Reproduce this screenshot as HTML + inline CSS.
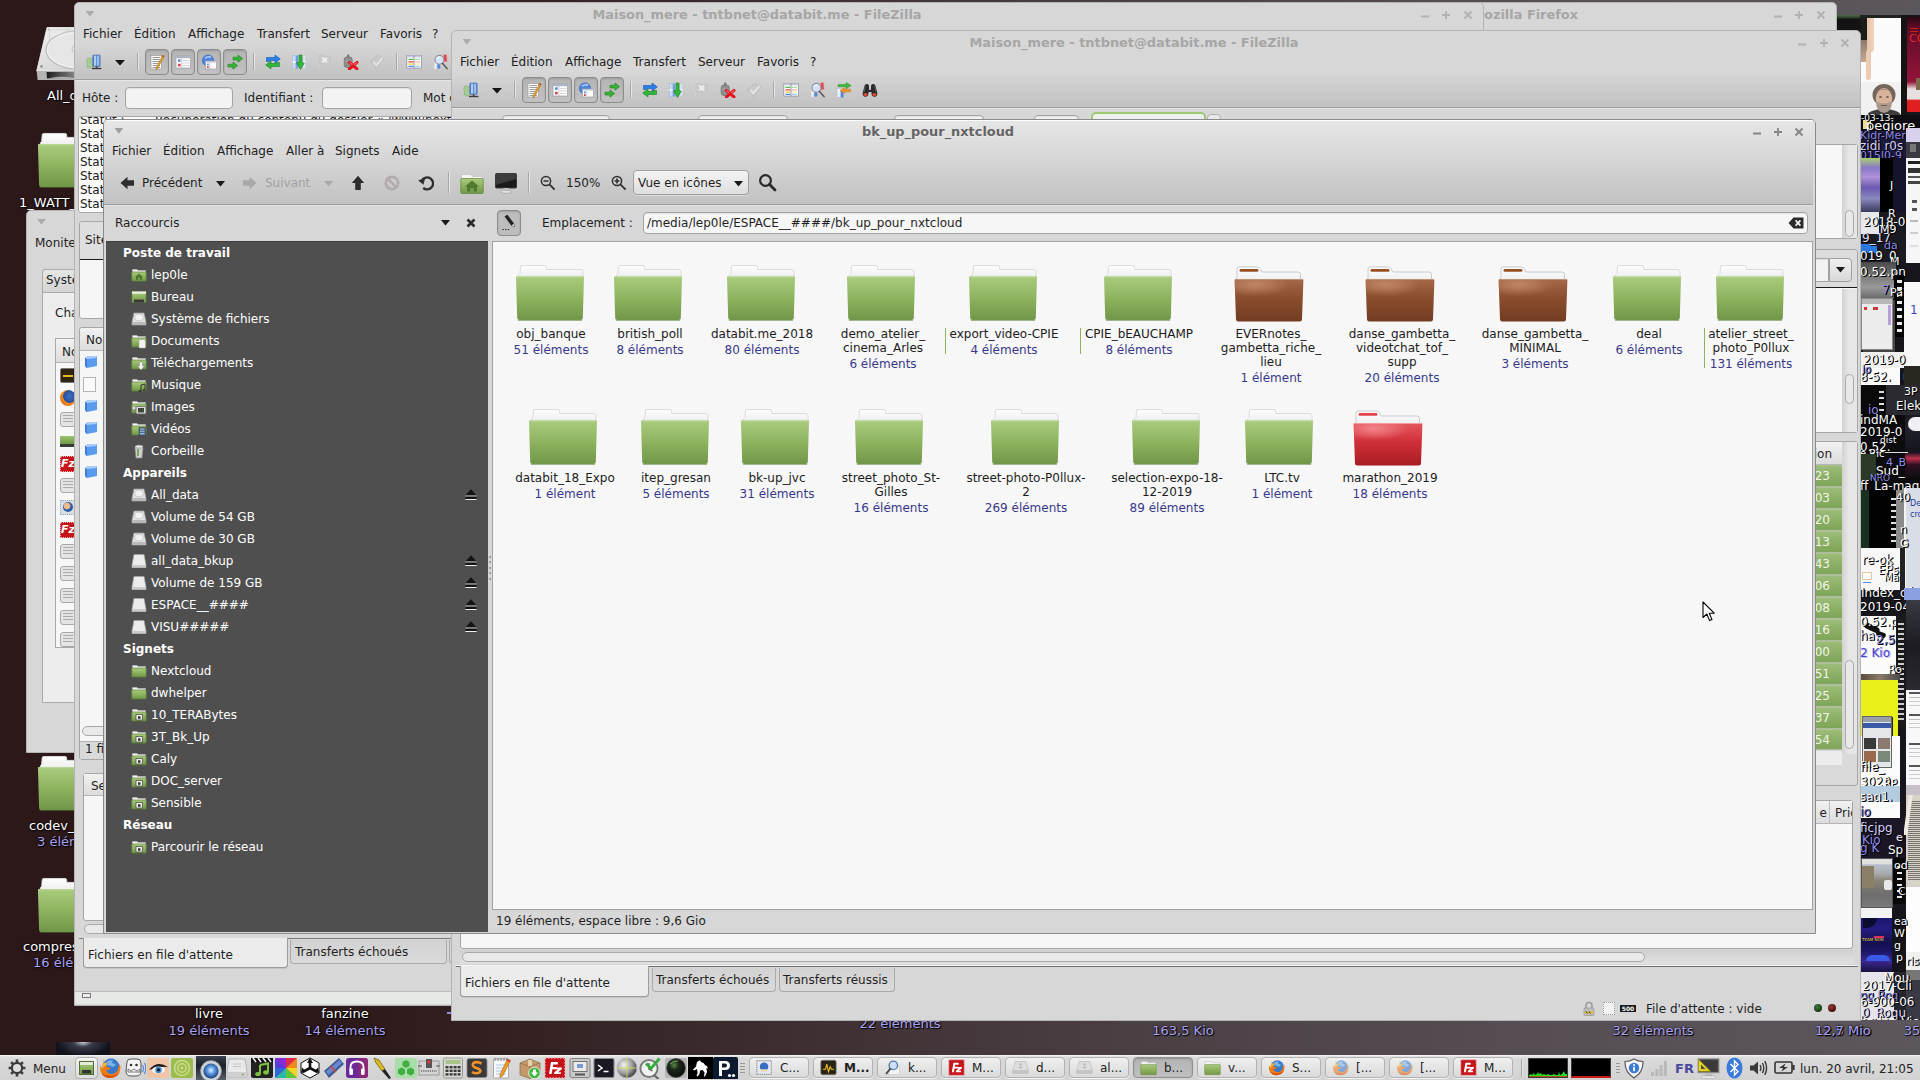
<!DOCTYPE html>
<html lang="fr"><head><meta charset="utf-8"><title>bk_up_pour_nxtcloud</title>
<style>
*{box-sizing:border-box;margin:0;padding:0}
html,body{width:1920px;height:1080px;overflow:hidden}
body{position:relative;background:linear-gradient(90deg,#2c1819 0,#2c1819 16%,#3a292b 36%,#483c40 55%,#554d53 78%,#5c565d 100%);font-family:"DejaVu Sans","Liberation Sans",sans-serif;font-size:12px;color:#1f1f1f;line-height:14px}
.a{position:absolute}
.t{position:absolute;white-space:nowrap;line-height:14px;margin-top:1px}
.win{position:absolute;background:#d7d7d7;border:1px solid #b4b4b4;border-radius:5px 5px 0 0;overflow:hidden}
.tb{position:absolute;left:0;right:0;top:0}
.ttl{position:absolute;margin-top:1px;font-weight:bold;font-size:12.9px;color:#a6a6a6;white-space:nowrap;line-height:16px;transform:translateX(-50%)}
.wb{position:absolute;font-weight:bold;color:#b0b0b0;font-size:13px;line-height:14px}
.menu{position:absolute;white-space:nowrap;line-height:14px;color:#222}
.menu span{position:absolute}
.inp{position:absolute;background:#f3f3f3;border:1px solid #a3a3a3;border-radius:4px;box-shadow:inset 0 1px 1px rgba(0,0,0,.08)}
.pan{position:absolute;background:#f7f7f7;border:1px solid #a6a6a6;border-radius:3px}
.hdr{position:absolute;background:linear-gradient(#f2f2f2,#dcdcdc);border-bottom:1px solid #b5b5b5}
.tgl{position:absolute;width:24px;height:26px;border:1px solid #8c8c8c;border-radius:4px;background:linear-gradient(#b4b4b4,#c2c2c2);box-shadow:inset 0 1px 2px rgba(0,0,0,.15)}
.sep{position:absolute;width:1px;background:#a8a8a8;box-shadow:1px 0 0 #e4e4e4}
.sbt{position:absolute;background:#e9e9e9;border:1px solid #a9a9a9;border-radius:6px}
.dl{position:absolute;white-space:nowrap;color:#fff;text-shadow:1px 1px 1px #000,0 0 2px #000;font-size:13px;line-height:14px}
.dc{position:absolute;white-space:nowrap;color:#a9a3f0;text-shadow:1px 1px 1px #000,0 0 2px #000;font-size:13px;line-height:14px}
.side{position:absolute;left:1px;top:121px;width:382px;height:691px;background:#4f4f4f;color:#fff}
.side .h{position:absolute;left:17px;font-weight:bold;white-space:nowrap;line-height:14px;font-size:12px}
.side .i{position:absolute;left:45px;white-space:nowrap;line-height:14px}
.fi{position:absolute;margin-top:1px;text-align:center;line-height:14px;color:#1c1c1c;transform:translateX(-50%);white-space:nowrap}
.fi i{font-style:normal;color:#37378a;display:block;margin-top:2px}
.tk{position:absolute;top:1057px;width:60px;height:21px;border:1px solid #b2b2b2;border-radius:4px;background:linear-gradient(#efefef,#dadada);box-shadow:0 1px 0 #f3f3f3}
.tk b,.tk span{position:absolute;left:30px;top:3px;font-size:12px;line-height:14px;color:#222;font-weight:normal}
.tk b{font-weight:bold}
</style></head><body>

<svg width="0" height="0" style="position:absolute">
<defs>
<linearGradient id="gG" x1="0" y1="0" x2="0" y2="1"><stop offset="0" stop-color="#a9cb7e"/><stop offset=".5" stop-color="#8db35f"/><stop offset="1" stop-color="#709748"/></linearGradient>
<linearGradient id="gB" x1="0" y1="0" x2="0" y2="1"><stop offset="0" stop-color="#a5694a"/><stop offset=".45" stop-color="#8a4d2e"/><stop offset="1" stop-color="#733c21"/></linearGradient>
<linearGradient id="gR" x1="0" y1="0" x2="0" y2="1"><stop offset="0" stop-color="#e4575e"/><stop offset=".45" stop-color="#d12f38"/><stop offset="1" stop-color="#a81c24"/></linearGradient>
<radialGradient id="gBh" cx=".3" cy=".25" r=".5"><stop offset="0" stop-color="#c48a68" stop-opacity=".9"/><stop offset="1" stop-color="#c48a68" stop-opacity="0"/></radialGradient>
<radialGradient id="gRh" cx=".3" cy=".25" r=".5"><stop offset="0" stop-color="#f58a8f" stop-opacity=".9"/><stop offset="1" stop-color="#f58a8f" stop-opacity="0"/></radialGradient>
<linearGradient id="gP" x1="0" y1="0" x2="0" y2="1"><stop offset="0" stop-color="#ffffff"/><stop offset="1" stop-color="#ececec"/></linearGradient>
<symbol id="fold" viewBox="0 0 70 60">
<path d="M3.5 12 Q3.5 10.5 5 9.5 L5.5 3 Q5.6 1.5 7 1.5 L30 1.5 Q31.3 1.5 31.4 3 L31.6 5.5 L66 5.5 Q68 5.5 68 7.5 L68 14 L3.5 14Z" fill="url(#gP)" stroke="#dcdcdc" stroke-width="1"/>
<path d="M1.5 12.5 L68.5 12.5 Q69 12.5 69 13.2 L67.8 54 Q67.7 56 65.7 56 L4.3 56 Q2.3 56 2.2 54 L1 13.2 Q1 12.5 1.5 12.5Z" fill="url(#gG)"/>
<path d="M1.3 13 L68.7 13" stroke="#b9d693" stroke-width="1" fill="none"/>
<path d="M3 56.5 L67 56.5" stroke="#5b7d38" stroke-width="1" opacity=".55" fill="none"/>
</symbol>
<symbol id="foldB" viewBox="0 0 70 60">
<path d="M3 14 L3 5 Q3 3 5 3 L23 3 Q25 3 26 4.5 L28 8 L64 8 Q66.5 8 66.5 10.5 L66.5 18 L3 18Z" fill="url(#gP)" stroke="#c9c9c9" stroke-width="1"/>
<rect x="5.5" y="5" width="19" height="2.8" rx="1.4" fill="#9a4f22"/>
<path d="M2 15 L68 15 Q69.5 15 69.4 16.5 L68 55.5 Q67.9 57.5 65.9 57.5 L4.1 57.5 Q2.1 57.5 2 55.5 L.6 16.5 Q.5 15 2 15Z" fill="url(#gB)"/>
<path d="M2 15 L68 15 Q69.5 15 69.4 16.5 L68.6 38 L1.4 38 L.6 16.5 Q.5 15 2 15Z" fill="url(#gBh)"/>
<path d="M1.5 15.5 L68.5 15.5" stroke="#c08f74" stroke-width="1" fill="none"/>
</symbol>
<symbol id="foldR" viewBox="0 0 70 60">
<path d="M3 14 L3 5 Q3 3 5 3 L23 3 Q25 3 26 4.5 L28 8 L64 8 Q66.5 8 66.5 10.5 L66.5 18 L3 18Z" fill="url(#gP)" stroke="#c9c9c9" stroke-width="1"/>
<rect x="5.5" y="5" width="19" height="2.8" rx="1.4" fill="#e8434c"/>
<path d="M2 15 L68 15 Q69.5 15 69.4 16.5 L68 55.5 Q67.9 57.5 65.9 57.5 L4.1 57.5 Q2.1 57.5 2 55.5 L.6 16.5 Q.5 15 2 15Z" fill="url(#gR)"/>
<path d="M2 15 L68 15 Q69.5 15 69.4 16.5 L68.6 38 L1.4 38 L.6 16.5 Q.5 15 2 15Z" fill="url(#gRh)"/>
<path d="M1.5 15.5 L68.5 15.5" stroke="#f39da1" stroke-width="1" fill="none"/>
</symbol>
<symbol id="sf" viewBox="0 0 16 16">
<path d="M1.5 4.5 L1.5 2.5 L6 2.5 L7 3.5 L14.5 3.5 L14.5 6 L1.5 6Z" fill="#f4f4f4" stroke="#bdbdbd" stroke-width=".6"/>
<rect x=".8" y="5" width="14.4" height="9" rx=".8" fill="url(#gG)" stroke="#5f843a" stroke-width=".7"/>
</symbol>
<symbol id="hd" viewBox="0 0 16 16">
<path d="M3 2 L13 2 L15 11 L15 14 L1 14 L1 11Z" fill="#e2e2e2" stroke="#9a9a9a" stroke-width=".8"/>
<path d="M1 11 L15 11 L15 14 L1 14Z" fill="#b9b9b9"/>
<ellipse cx="8" cy="6.5" rx="4.3" ry="3.3" fill="#f1f1f1" stroke="#bdbdbd" stroke-width=".7"/>
</symbol>
<symbol id="usb" viewBox="0 0 16 16">
<path d="M3 1.5 L13 1.5 L15 12 L15 14.5 L1 14.5 L1 12Z" fill="#ececec" stroke="#a5a5a5" stroke-width=".8"/>
<path d="M1 12 L15 12 L15 14.5 L1 14.5Z" fill="#c9c9c9"/>
</symbol>
<symbol id="ej" viewBox="0 0 12 12"><path d="M6 .3 L11.6 6.6 L.4 6.6Z" fill="#141414"/><rect x=".4" y="6.6" width="11.2" height="1" fill="#f2f2f2"/><rect x=".4" y="7.6" width="11.2" height="2.4" fill="#141414"/><rect x=".4" y="10" width="11.2" height="1" fill="#f2f2f2"/></symbol>
</defs></svg>

<svg class="a" style="left:36px;top:26px" width="60" height="56" viewBox="0 0 60 56">
<defs><linearGradient id="hdg" x1="0" y1="0" x2="1" y2="1"><stop offset="0" stop-color="#f2f2f2"/><stop offset=".6" stop-color="#d9d9d9"/><stop offset="1" stop-color="#c4c4c4"/></linearGradient>
<linearGradient id="hds" x1="0" y1="0" x2="1" y2="0"><stop offset="0" stop-color="#1c1c1c"/><stop offset=".6" stop-color="#8a8a8a"/><stop offset="1" stop-color="#cfcfcf"/></linearGradient></defs>
<path d="M11 1.5 L60 1.5 L60 45 L.7 45Z" fill="url(#hdg)" stroke="#f4f4f4" stroke-width=".8"/>
<path d="M.7 45 L60 45 L60 54 L1.6 54Z" fill="#b4b4b4"/>
<path d="M10.5 46 L60 46 L60 52.5 L11 52.5Z" fill="url(#hds)"/>
<path d="M11 52.5 Q25 49 40 52.5Z" fill="#e0e0e0" opacity=".7"/>
<path d="M14 4 L34 3.5 Q20 9 13 19Z" fill="#e9e9e9" stroke="#c9c9c9" stroke-width=".6"/>
<ellipse cx="42" cy="24" rx="32" ry="19" fill="#e6e6e6" stroke="#bcbcbc" stroke-width="1.2"/>
<ellipse cx="42" cy="24" rx="30.5" ry="17.6" fill="none" stroke="#f6f6f6" stroke-width=".8"/>
<ellipse cx="48" cy="23" rx="12" ry="6" fill="#ececec" stroke="#c0c0c0" stroke-width="1"/>
<circle cx="12.5" cy="3.5" r="1" fill="#aaa"/><circle cx="5.5" cy="40.5" r="1.3" fill="#8a8a8a"/></svg>
<div class="dl" style="left:47px;top:89px">All_data</div>
<svg class="a" style="left:37px;top:132px" width="66" height="59" viewBox="0 0 70 60" preserveAspectRatio="none"><use href="#fold" width="70" height="60"/></svg>
<div class="dl" style="left:19px;top:196px">1_WATT_pollux</div>
<svg class="a" style="left:37px;top:755px" width="66" height="59" viewBox="0 0 70 60" preserveAspectRatio="none"><use href="#fold" width="70" height="60"/></svg>
<div class="dl" style="left:29px;top:819px">codev_</div>
<div class="dc" style="left:37px;top:835px">3 éléments</div>
<svg class="a" style="left:37px;top:877px" width="66" height="59" viewBox="0 0 70 60" preserveAspectRatio="none"><use href="#fold" width="70" height="60"/></svg>
<div class="dl" style="left:23px;top:940px">compress</div>
<div class="dc" style="left:33px;top:956px">16 éléments</div>
<div class="dl" style="left:209px;top:1007px;transform:translateX(-50%)">livre</div>
<div class="dc" style="left:209px;top:1024px;transform:translateX(-50%)">19 éléments</div>
<div class="dl" style="left:345px;top:1007px;transform:translateX(-50%)">fanzine</div>
<div class="dc" style="left:345px;top:1024px;transform:translateX(-50%)">14 éléments</div>
<div class="dc" style="left:900px;top:1017px;transform:translateX(-50%)">22 éléments</div>
<div class="dc" style="left:1183px;top:1024px;transform:translateX(-50%)">163,5 Kio</div>
<div class="dc" style="left:1653px;top:1024px;transform:translateX(-50%)">32 éléments</div>
<div class="dc" style="left:1843px;top:1024px;transform:translateX(-50%)">12,5 Mio</div>
<div class="dc" style="left:1847px;top:1024px;transform:translateX(-50%)">2,7 Mio</div>
<div class="dc" style="left:1918px;top:1024px;transform:translateX(-50%)">35 é</div>
<div class="a" style="left:56px;top:1042px;width:54px;height:14px;background:radial-gradient(ellipse at 50% 0,#c9cdd6 0,#3a3d48 25%,#10131c 70%)"></div>
<div class="a" style="left:447px;top:1012px;width:4px;height:2px;background:#8f8bd8"></div>
<div class="a" style="left:1837px;top:15px;width:24px;height:20px;background:linear-gradient(#4a6a44 0,#2a3a28 3px,#121212 4px,#161616 100%)"></div>
<div class="a" style="left:1860px;top:15px;width:60px;height:1005px;overflow:hidden;background:#16161c">
<div class="a" style="left:0px;top:0px;width:41px;height:3px;background:#20241e;"></div>
<div class="a" style="left:1px;top:3px;width:40px;height:64px;background:#fbfbfb;"></div>
<div class="a" style="left:1px;top:3px;width:7px;height:22px;background:#1c1c1c;"></div>
<div class="a" style="left:1px;top:25px;width:6px;height:22px;background:linear-gradient(#8a7a70,#c8a890);"></div>
<div class="a" style="left:7px;top:3px;width:7px;height:34px;background:linear-gradient(90deg,#e8c4a8,#f0d4bc);border-radius:0 0 4px 4px"></div>
<div class="a" style="left:6px;top:35px;width:5px;height:30px;background:#ecccb4;border-radius:3px"></div>
<div class="a" style="left:1px;top:67px;width:40px;height:33px;background:#f1f1f1;"></div>
<svg class="a" style="left:1px;top:67px" width="40" height="33" viewBox="0 0 40 33"><ellipse cx="23" cy="34" rx="17" ry="7" fill="#3c3c3c"/><ellipse cx="23" cy="13" rx="11.5" ry="11" fill="#74665c"/><ellipse cx="23" cy="17" rx="8.2" ry="11" fill="#d9b29c"/><path d="M15 19 Q23 24 31 19 Q31 30 23 31 Q15 30 15 19Z" fill="#a8988e"/><path d="M14 12 Q23 2 32 12 Q28 7 23 7.5 Q18 7 14 12Z" fill="#5c5048"/><ellipse cx="19.5" cy="15" rx="1.4" ry=".8" fill="#4a3a34"/><ellipse cx="26.5" cy="15" rx="1.4" ry=".8" fill="#4a3a34"/><path d="M20 23.5h6" stroke="#7a5a50" stroke-width="1"/></svg>
<div class="a" style="left:41px;top:0px;width:6px;height:100px;background:#141414;"></div>
<div class="a" style="left:47px;top:2px;width:13px;height:95px;background:linear-gradient(#2a0810 0,#5a0c24 10%,#7a1030 40%,#94143a 68%,#e8e0e0 76%,#e8e0e0 86%,#e02020 88%,#e02020 100%);"></div>
<div class="t" style="left:49px;top:16px;color:#e8262c;font-size:11px;text-shadow:1px 1px 0 transparent,1px 0 0 transparent">CO</div>
<div class="a" style="left:50px;top:13px;width:8px;height:1px;background:#c02020;"></div>
<div class="a" style="left:50px;top:16px;width:8px;height:1px;background:#c02020;"></div>
<div class="a" style="left:56px;top:63px;width:4px;height:12px;background:#7a6a4a;"></div>
<div class="a" style="left:0px;top:100px;width:60px;height:16px;background:#0e0e12;"></div>
<div class="a" style="left:3px;top:105px;width:8px;height:9px;background:#e8e098;"></div>
<div class="t" style="left:1px;top:95px;color:#fff;font-size:9px;text-shadow:1px 1px 0 #000,1px 0 0 #000">-03-13-</div>
<div class="t" style="left:6px;top:103px;color:#fff;font-size:13px;text-shadow:1px 1px 0 #000,1px 0 0 #000">pegiore</div>
<div class="a" style="left:0px;top:116px;width:46px;height:28px;background:#1c1a3a;"></div>
<div class="t" style="left:0px;top:113px;color:#8f8be6;font-size:11px;text-shadow:1px 1px 0 #000,1px 0 0 #000">Kidr-Mer</div>
<div class="t" style="left:0px;top:123px;color:#d8d4ff;font-size:12px;text-shadow:1px 1px 0 #000,1px 0 0 #000">zidi r0s</div>
<div class="t" style="left:0px;top:133px;color:#8f8be6;font-size:11px;text-shadow:1px 1px 0 #000,1px 0 0 #000">015l0-9</div>
<div class="t" style="left:30px;top:139px;color:#fff;font-size:12px;text-shadow:1px 1px 0 #000,1px 0 0 #000">g.</div>
<div class="a" style="left:46px;top:113px;width:14px;height:14px;background:#d8d0ec;"></div>
<div class="a" style="left:46px;top:127px;width:14px;height:16px;background:#3a3a40;"></div>
<div class="a" style="left:50px;top:129px;width:6px;height:8px;background:#777;"></div>
<div class="a" style="left:1px;top:143px;width:19px;height:54px;background:linear-gradient(#a8d070 0,#8a78c8 18%,#b090d8 35%,#6a5ab0 55%,#8a88c0 75%,#3a3a5a 100%);"></div>
<div class="a" style="left:20px;top:143px;width:13px;height:54px;background:#000;"></div>
<div class="a" style="left:33px;top:143px;width:13px;height:54px;background:#14142c;"></div>
<div class="a" style="left:46px;top:143px;width:14px;height:105px;background:#f6f6f6;"></div>
<div class="a" style="left:48px;top:146px;width:12px;height:3px;background:#222;"></div>
<div class="a" style="left:48px;top:153px;width:12px;height:5px;background:#333;"></div>
<div class="a" style="left:48px;top:161px;width:12px;height:2px;background:#555;"></div>
<div class="a" style="left:48px;top:166px;width:12px;height:3px;background:#444;"></div>
<div class="a" style="left:52px;top:185px;width:5px;height:3px;background:#555;"></div>
<div class="a" style="left:52px;top:193px;width:5px;height:3px;background:#555;"></div>
<div class="a" style="left:50px;top:205px;width:8px;height:2px;background:#bbb;"></div>
<div class="a" style="left:50px;top:217px;width:8px;height:2px;background:#ccc;"></div>
<div class="a" style="left:50px;top:230px;width:8px;height:2px;background:#ddd;"></div>
<div class="t" style="left:30px;top:163px;color:#fff;font-size:11px;text-shadow:1px 1px 0 #000,1px 0 0 #000">J</div>
<div class="a" style="left:0px;top:197px;width:46px;height:50px;background:#1a1a22;"></div>
<div class="a" style="left:1px;top:197px;width:18px;height:22px;background:#e8e8ec;"></div>
<div class="a" style="left:1px;top:229px;width:16px;height:9px;background:#2a78e0;"></div>
<div class="t" style="left:3px;top:199px;color:#fff;font-size:12px;text-shadow:1px 1px 0 #000,1px 0 0 #000">2018-0</div>
<div class="t" style="left:2px;top:215px;color:#e8e4ff;font-size:12px;text-shadow:1px 1px 0 #000,1px 0 0 #000">9_17</div>
<div class="t" style="left:0px;top:233px;color:#fff;font-size:12px;text-shadow:1px 1px 0 #000,1px 0 0 #000">019_0</div>
<div class="t" style="left:28px;top:191px;color:#fff;font-size:11px;text-shadow:1px 1px 0 #000,1px 0 0 #000">R</div>
<div class="t" style="left:20px;top:207px;color:#fff;font-size:11px;text-shadow:1px 1px 0 #000,1px 0 0 #000">M9</div>
<div class="t" style="left:24px;top:223px;color:#8f8be6;font-size:11px;text-shadow:1px 1px 0 #000,1px 0 0 #000">da</div>
<div class="t" style="left:30px;top:239px;color:#fff;font-size:11px;text-shadow:1px 1px 0 #000,1px 0 0 #000">M</div>
<div class="a" style="left:0px;top:247px;width:36px;height:36px;background:linear-gradient(#4a4a4a,#7a7a7a 40%,#9a9a9a 70%,#6a6a6a 100%);"></div>
<div class="t" style="left:0px;top:249px;color:#fff;font-size:12px;text-shadow:1px 1px 0 #000,1px 0 0 #000">0.52.pn</div>
<div class="a" style="left:34px;top:260px;width:10px;height:62px;background:#050505;"></div>
<div class="a" style="left:37px;top:261px;width:5px;height:60px;background:repeating-linear-gradient(#050505 0,#050505 4px,#e8e8e8 4px,#e8e8e8 7px);"></div>
<div class="t" style="left:22px;top:267px;color:#8f8be6;font-size:12px;text-shadow:1px 1px 0 #000,1px 0 0 #000">7</div>
<div class="t" style="left:30px;top:270px;color:#fff;font-size:11px;text-shadow:1px 1px 0 #000,1px 0 0 #000">Pa</div>
<div class="t" style="left:44px;top:270px;color:#fff;font-size:12px;text-shadow:1px 1px 0 #000,1px 0 0 #000">TU</div>
<div class="a" style="left:44px;top:267px;width:16px;height:84px;background:#f8f8f8;"></div>
<div class="t" style="left:50px;top:287px;color:#4a44c0;font-size:12px;text-shadow:1px 1px 0 transparent,1px 0 0 transparent">1</div>
<div class="a" style="left:1px;top:283px;width:32px;height:52px;background:#ececec;border:1px solid #888;box-shadow:2px 2px 0 #444"></div>
<div class="a" style="left:2px;top:284px;width:30px;height:5px;background:#b8b8b8;"></div>
<div class="a" style="left:4px;top:292px;width:3px;height:3px;background:#e83030;"></div>
<div class="a" style="left:13px;top:292px;width:5px;height:3px;background:#c83a3a;"></div>
<div class="a" style="left:28px;top:290px;width:3px;height:20px;background:#b8a0d8;"></div>
<div class="a" style="left:0px;top:337px;width:44px;height:16px;background:#f0f0f0;"></div>
<div class="t" style="left:3px;top:337px;color:#fff;font-size:12px;text-shadow:1px 1px 0 #000,1px 0 0 #000">2019-0</div>
<div class="a" style="left:0px;top:353px;width:40px;height:17px;background:#fafafa;"></div>
<div class="t" style="left:0px;top:354px;color:#fff;font-size:12px;text-shadow:1px 1px 0 #000,1px 0 0 #000">8-52.</div>
<div class="t" style="left:2px;top:347px;color:#8f8be6;font-size:10px;text-shadow:1px 1px 0 #000,1px 0 0 #000">io</div>
<div class="t" style="left:43px;top:353px;color:#fff;font-size:12px;text-shadow:1px 1px 0 #000,1px 0 0 #000">ron</div>
<div class="a" style="left:44px;top:351px;width:16px;height:20px;background:#2a2620;"></div>
<div class="a" style="left:0px;top:370px;width:26px;height:30px;background:#0a0a0a;"></div>
<div class="a" style="left:19px;top:372px;width:5px;height:28px;background:repeating-linear-gradient(#0a0a0a 0,#0a0a0a 4px,#ddd 4px,#ddd 6px);"></div>
<div class="a" style="left:26px;top:370px;width:34px;height:30px;background:#2a2a30;"></div>
<div class="t" style="left:44px;top:369px;color:#fff;font-size:11px;text-shadow:1px 1px 0 #000,1px 0 0 #000">3P</div>
<div class="t" style="left:36px;top:383px;color:#fff;font-size:12px;text-shadow:1px 1px 0 #000,1px 0 0 #000">Elek</div>
<div class="t" style="left:8px;top:387px;color:#8f8be6;font-size:12px;text-shadow:1px 1px 0 #000,1px 0 0 #000">io</div>
<div class="a" style="left:0px;top:400px;width:60px;height:75px;background:#0c0c0e;"></div>
<div class="a" style="left:45px;top:400px;width:15px;height:62px;background:linear-gradient(#1a1a24 0,#20202c 25%,#14141c 60%,#c03050 70%,#301020 80%,#101014 100%);"></div>
<div class="a" style="left:48px;top:402px;width:12px;height:14px;background:#f0f0f4;border-radius:8px 0 0 8px"></div>
<div class="t" style="left:0px;top:397px;color:#fff;font-size:12px;text-shadow:1px 1px 0 #000,1px 0 0 #000">indMA</div>
<div class="t" style="left:0px;top:409px;color:#fff;font-size:12px;text-shadow:1px 1px 0 #000,1px 0 0 #000">2019-0</div>
<div class="t" style="left:20px;top:417px;color:#fff;font-size:9px;text-shadow:1px 1px 0 #000,1px 0 0 #000">dist</div>
<div class="t" style="left:0px;top:424px;color:#fff;font-size:12px;text-shadow:1px 1px 0 #000,1px 0 0 #000">0.52.</div>
<div class="a" style="left:12px;top:437px;width:36px;height:1px;background:#ddd;"></div>
<div class="t" style="left:0px;top:431px;color:#fff;font-size:10px;text-shadow:1px 1px 0 #000,1px 0 0 #000">e.Ric</div>
<div class="a" style="left:0px;top:439px;width:16px;height:26px;background:#2a3a26;"></div>
<div class="t" style="left:26px;top:440px;color:#8f8be6;font-size:11px;text-shadow:1px 1px 0 #000,1px 0 0 #000">4_B</div>
<div class="t" style="left:16px;top:448px;color:#fff;font-size:12px;text-shadow:1px 1px 0 #000,1px 0 0 #000">Sud_</div>
<div class="t" style="left:10px;top:455px;color:#8f8be6;font-size:9px;text-shadow:1px 1px 0 #000,1px 0 0 #000">NRO</div>
<div class="t" style="left:0px;top:463px;color:#fff;font-size:12px;text-shadow:1px 1px 0 #000,1px 0 0 #000">ff_La-mag</div>
<div class="a" style="left:8px;top:477px;width:12px;height:1px;background:#fff;"></div>
<div class="a" style="left:0px;top:475px;width:9px;height:58px;background:#1a3020;"></div>
<div class="a" style="left:9px;top:475px;width:27px;height:58px;background:#020202;"></div>
<div class="a" style="left:31px;top:479px;width:5px;height:52px;background:repeating-linear-gradient(#020202 0,#020202 4px,#e0e0e0 4px,#e0e0e0 6px);"></div>
<div class="a" style="left:36px;top:475px;width:8px;height:58px;background:#8a8a8a;"></div>
<div class="a" style="left:44px;top:473px;width:16px;height:100px;background:#d9dde8;border-left:2px solid #f4f4f4"></div>
<div class="t" style="left:50px;top:481px;color:#2838a0;font-size:8px;text-shadow:1px 1px 0 transparent,1px 0 0 transparent">De</div>
<div class="t" style="left:50px;top:492px;color:#2838a0;font-size:8px;text-shadow:1px 1px 0 transparent,1px 0 0 transparent">cro</div>
<div class="t" style="left:36px;top:475px;color:#fff;font-size:11px;text-shadow:1px 1px 0 #000,1px 0 0 #000">40</div>
<div class="t" style="left:40px;top:507px;color:#fff;font-size:11px;text-shadow:1px 1px 0 #000,1px 0 0 #000">n</div>
<div class="t" style="left:40px;top:521px;color:#fff;font-size:11px;text-shadow:1px 1px 0 #000,1px 0 0 #000">G</div>
<div class="a" style="left:0px;top:533px;width:40px;height:42px;background:#f8f8f8;"></div>
<div class="a" style="left:40px;top:533px;width:5px;height:42px;background:#222;"></div>
<div class="a" style="left:2px;top:557px;width:10px;height:8px;background:#fdfdfd;border:1px solid #e0c8a0"></div>
<div class="a" style="left:3px;top:567px;width:8px;height:1px;background:#4a8ae0;"></div>
<div class="t" style="left:2px;top:537px;color:#fff;font-size:12px;text-shadow:1px 1px 0 #000,1px 0 0 #000">re-ok</div>
<div class="t" style="left:18px;top:547px;color:#fff;font-size:12px;text-shadow:1px 1px 0 #000,1px 0 0 #000">EPs</div>
<div class="t" style="left:24px;top:555px;color:#fff;font-size:10px;text-shadow:1px 1px 0 #000,1px 0 0 #000">Ma</div>
<div class="a" style="left:0px;top:575px;width:60px;height:28px;background:#18181c;"></div>
<div class="t" style="left:1px;top:570px;color:#fff;font-size:12px;text-shadow:1px 1px 0 #000,1px 0 0 #000">Index_of</div>
<div class="t" style="left:0px;top:584px;color:#fff;font-size:12px;text-shadow:1px 1px 0 #000,1px 0 0 #000">2019-04-1</div>
<div class="a" style="left:44px;top:573px;width:16px;height:12px;background:#8aa0e0;"></div>
<div class="a" style="left:0px;top:601px;width:36px;height:60px;background:#fbfbfb;"></div>
<div class="a" style="left:4px;top:610px;width:16px;height:6px;background:#111;border-radius:6px;transform:rotate(25deg)"></div>
<div class="a" style="left:16px;top:617px;width:10px;height:5px;background:#111;border-radius:4px;transform:rotate(20deg)"></div>
<div class="t" style="left:0px;top:599px;color:#fff;font-size:12px;text-shadow:1px 1px 0 #000,1px 0 0 #000">0.52.png-</div>
<div class="t" style="left:0px;top:613px;color:#e8e8ff;font-size:12px;text-shadow:1px 1px 0 #000,1px 0 0 #000">ha.</div>
<div class="t" style="left:16px;top:617px;color:#8f8be6;font-size:12px;text-shadow:1px 1px 0 #000,1px 0 0 #000">2,5 Mi</div>
<div class="t" style="left:0px;top:630px;color:#4844c8;font-size:12px;text-shadow:1px 1px 0 #c8c4f8,1px 0 0 #c8c4f8">2 Kio</div>
<div class="a" style="left:36px;top:601px;width:10px;height:110px;background:#1a1a1a;"></div>
<div class="a" style="left:38px;top:605px;width:6px;height:100px;background:repeating-linear-gradient(#1a1a1a 0,#1a1a1a 3px,#ccc 3px,#ccc 5px);"></div>
<div class="a" style="left:46px;top:585px;width:14px;height:90px;background:linear-gradient(#3a3a44,#1c1c22 50%,#2a2a30);"></div>
<div class="t" style="left:28px;top:647px;color:#fff;font-size:11px;text-shadow:1px 1px 0 #000,1px 0 0 #000">Ro</div>
<div class="a" style="left:0px;top:659px;width:40px;height:6px;background:linear-gradient(90deg,#5a4a3a,#8a7a6a,#4a4a4a);"></div>
<div class="a" style="left:1px;top:665px;width:37px;height:56px;background:#eaf01a;"></div>
<div class="a" style="left:2px;top:701px;width:30px;height:52px;background:#e4e6ea;border:1px solid #666;box-shadow:1px 1px 0 #222"></div>
<div class="a" style="left:3px;top:702px;width:28px;height:5px;background:#9aa0a8;"></div>
<div class="a" style="left:3px;top:708px;width:28px;height:5px;background:#3a5aa8;"></div>
<div class="a" style="left:4px;top:723px;width:12px;height:11px;background:#3a3a3a;"></div>
<div class="a" style="left:18px;top:723px;width:12px;height:11px;background:#8a7a70;"></div>
<div class="a" style="left:4px;top:736px;width:12px;height:11px;background:#9a6a4a;"></div>
<div class="a" style="left:18px;top:736px;width:12px;height:11px;background:#7a8a78;"></div>
<div class="a" style="left:0px;top:721px;width:2px;height:54px;background:#fff;"></div>
<div class="a" style="left:0px;top:753px;width:40px;height:22px;background:#fafafa;"></div>
<div class="a" style="left:32px;top:721px;width:8px;height:32px;background:#fafafa;"></div>
<div class="t" style="left:0px;top:744px;color:#fff;font-size:12px;text-shadow:1px 1px 0 #000,1px 0 0 #000">file_</div>
<div class="t" style="left:0px;top:759px;color:#fff;font-size:12px;text-shadow:1px 1px 0 #000,1px 0 0 #000">3020</div>
<div class="t" style="left:24px;top:761px;color:#fff;font-size:10px;text-shadow:1px 1px 0 #000,1px 0 0 #000">RP</div>
<div class="a" style="left:46px;top:675px;width:14px;height:95px;background:#f8f8f8;"></div>
<div class="a" style="left:49px;top:677px;width:11px;height:2px;background:#555;"></div>
<div class="a" style="left:49px;top:682px;width:11px;height:1px;background:#bbb;"></div>
<div class="a" style="left:49px;top:686px;width:11px;height:1px;background:#ccc;"></div>
<div class="a" style="left:49px;top:690px;width:11px;height:1px;background:#ccc;"></div>
<div class="a" style="left:49px;top:699px;width:11px;height:2px;background:#555;"></div>
<div class="a" style="left:49px;top:704px;width:11px;height:1px;background:#bbb;"></div>
<div class="a" style="left:49px;top:708px;width:11px;height:1px;background:#ccc;"></div>
<div class="a" style="left:49px;top:712px;width:11px;height:1px;background:#ccc;"></div>
<div class="a" style="left:49px;top:728px;width:11px;height:2px;background:#555;"></div>
<div class="a" style="left:49px;top:733px;width:11px;height:1px;background:#bbb;"></div>
<div class="a" style="left:49px;top:737px;width:11px;height:1px;background:#ccc;"></div>
<div class="a" style="left:49px;top:741px;width:11px;height:1px;background:#ccc;"></div>
<div class="a" style="left:49px;top:750px;width:11px;height:2px;background:#555;"></div>
<div class="a" style="left:49px;top:755px;width:11px;height:1px;background:#bbb;"></div>
<div class="a" style="left:49px;top:759px;width:11px;height:1px;background:#ccc;"></div>
<div class="a" style="left:49px;top:763px;width:11px;height:1px;background:#ccc;"></div>
<div class="a" style="left:0px;top:771px;width:40px;height:16px;background:#b4cce0;"></div>
<div class="t" style="left:0px;top:774px;color:#fff;font-size:12px;text-shadow:1px 1px 0 #000,1px 0 0 #000">sag1.</div>
<div class="a" style="left:0px;top:787px;width:40px;height:16px;background:#fbfbfb;"></div>
<div class="t" style="left:0px;top:789px;color:#8f8be6;font-size:12px;text-shadow:1px 1px 0 #000,1px 0 0 #000">io</div>
<div class="a" style="left:46px;top:770px;width:14px;height:10px;background:#c8c0c8;"></div>
<div class="a" style="left:46px;top:780px;width:14px;height:92px;background:#d6d2c8;"></div>
<div class="a" style="left:48px;top:785px;width:12px;height:80px;background:repeating-linear-gradient(#d6d2c8 0,#d6d2c8 1px,#77736c 1px,#77736c 2px);"></div>
<div class="a" style="left:46px;top:780px;width:4px;height:40px;background:#eeeae0;transform:skewX(-8deg)"></div>
<div class="a" style="left:0px;top:803px;width:44px;height:40px;background:#1a1626;"></div>
<div class="t" style="left:0px;top:805px;color:#d8d4ff;font-size:12px;text-shadow:1px 1px 0 #000,1px 0 0 #000">ficjpg</div>
<div class="t" style="left:2px;top:817px;color:#8f8be6;font-size:12px;text-shadow:1px 1px 0 #000,1px 0 0 #000">Kio</div>
<div class="t" style="left:0px;top:825px;color:#8f8be6;font-size:12px;text-shadow:1px 1px 0 #000,1px 0 0 #000">g K</div>
<div class="t" style="left:28px;top:827px;color:#fff;font-size:12px;text-shadow:1px 1px 0 #000,1px 0 0 #000">Sp</div>
<div class="t" style="left:36px;top:815px;color:#fff;font-size:11px;text-shadow:1px 1px 0 #000,1px 0 0 #000">e</div>
<div class="a" style="left:1px;top:843px;width:32px;height:50px;background:linear-gradient(#e0e0e0 0,#e0e0e0 10%,#b8c0cc 12%,#a8acb0 30%,#8a8478 45%,#7a7670 60%,#6e6e6e 75%,#7a7a7a 100%);border:1px solid #555"></div>
<div class="a" style="left:2px;top:851px;width:12px;height:22px;background:#8a8068;"></div>
<div class="a" style="left:24px;top:865px;width:8px;height:10px;background:#e8e8e8;border-radius:2px"></div>
<div class="a" style="left:33px;top:843px;width:12px;height:46px;background:#080808;"></div>
<div class="a" style="left:37px;top:847px;width:5px;height:36px;background:repeating-linear-gradient(#080808 0,#080808 4px,#e8e8e8 4px,#e8e8e8 6px);"></div>
<div class="t" style="left:34px;top:843px;color:#fff;font-size:11px;text-shadow:1px 1px 0 #000,1px 0 0 #000">od</div>
<div class="t" style="left:38px;top:869px;color:#fff;font-size:11px;text-shadow:1px 1px 0 #000,1px 0 0 #000">C</div>
<div class="a" style="left:46px;top:872px;width:14px;height:65px;background:#fdfdfd;"></div>
<div class="a" style="left:0px;top:893px;width:40px;height:10px;background:#f4f4f4;"></div>
<div class="a" style="left:0px;top:903px;width:1px;height:56px;background:#eee;"></div>
<div class="a" style="left:1px;top:903px;width:31px;height:54px;background:linear-gradient(#1c1870 0,#241c80 20%,#141050 45%,#1a1460 60%,#3a2890 80%,#181040 100%);"></div>
<div class="a" style="left:3px;top:903px;width:14px;height:10px;background:#0c0c30;border-radius:0 0 10px 0"></div>
<div class="t" style="left:2px;top:917px;color:#e8d820;font-size:4px;text-shadow:1px 1px 0 transparent,1px 0 0 transparent">TEAM NON</div>
<div class="a" style="left:14px;top:921px;width:10px;height:2px;background:#e03060;"></div>
<div class="a" style="left:6px;top:940px;width:24px;height:6px;background:#3a5ae8;border-radius:6px 6px 0 0"></div>
<div class="a" style="left:32px;top:893px;width:14px;height:66px;background:#14141a;"></div>
<div class="t" style="left:34px;top:899px;color:#fff;font-size:11px;text-shadow:1px 1px 0 #000,1px 0 0 #000">ea</div>
<div class="t" style="left:34px;top:911px;color:#fff;font-size:11px;text-shadow:1px 1px 0 #000,1px 0 0 #000">W</div>
<div class="t" style="left:34px;top:923px;color:#fff;font-size:11px;text-shadow:1px 1px 0 #000,1px 0 0 #000">g</div>
<div class="t" style="left:36px;top:935px;color:#fff;font-size:11px;text-shadow:1px 1px 0 #000,1px 0 0 #000">p</div>
<div class="a" style="left:46px;top:937px;width:14px;height:18px;background:#f0f0f0;"></div>
<div class="t" style="left:46px;top:939px;color:#fff;font-size:11px;text-shadow:1px 1px 0 #000,1px 0 0 #000">ris</div>
<div class="a" style="left:0px;top:957px;width:60px;height:48px;background:#26262e;"></div>
<div class="a" style="left:0px;top:957px;width:34px;height:48px;background:#e6e6ea;"></div>
<div class="a" style="left:46px;top:955px;width:14px;height:10px;background:#777;"></div>
<div class="a" style="left:46px;top:965px;width:14px;height:40px;background:#3a3a44;"></div>
<div class="t" style="left:24px;top:955px;color:#fff;font-size:12px;text-shadow:1px 1px 0 #000,1px 0 0 #000">Mou</div>
<div class="t" style="left:2px;top:963px;color:#fff;font-size:12px;text-shadow:1px 1px 0 #000,1px 0 0 #000">2017-Cli</div>
<div class="t" style="left:0px;top:973px;color:#8f8be6;font-size:11px;text-shadow:1px 1px 0 #000,1px 0 0 #000">pg Roq</div>
<div class="t" style="left:0px;top:979px;color:#fff;font-size:12px;text-shadow:1px 1px 0 #000,1px 0 0 #000">6-900-06</div>
<div class="t" style="left:2px;top:990px;color:#e0dcff;font-size:12px;text-shadow:1px 1px 0 #000,1px 0 0 #000">0_Roqu</div>
<div class="t" style="left:0px;top:999px;color:#fff;font-size:12px;text-shadow:1px 1px 0 #000,1px 0 0 #000">ha.jpg Vie</div>
</div>
<div class="win" style="left:26px;top:210px;width:60px;height:543px;border-radius:5px 0 0 0"><div class="a" style="left:0;top:1px;width:60px;height:540px">
<svg class="a" style="left:10px;top:7px" width="9" height="6"><path d="M0 0L9 0L4.5 5.5Z" fill="#ababab"/></svg>
<div class="t" style="left:8px;top:23px">Moniteur</div>
<div class="a" style="left:15px;top:57px;width:60px;height:434px;background:#ededed;border:1px solid #aaa;border-radius:3px 0 0 0"></div>
<div class="a" style="left:15px;top:57px;width:60px;height:24px;background:linear-gradient(#e6e6e6,#d4d4d4);border:1px solid #aaa;border-radius:3px 0 0 0"></div>
<div class="t" style="left:19px;top:60px">Système</div>
<div class="t" style="left:28px;top:93px">Charge</div>
<div class="a" style="left:28px;top:126px;width:40px;height:310px;background:#f7f7f7;border:1px solid #a9a9a9"></div>
<div class="hdr" style="left:29px;top:127px;width:40px;height:24px"></div>
<div class="t" style="left:35px;top:132px">Nom</div>
<div class="a" style="left:33px;top:156px;width:16px;height:15px;background:#2e2410;border:1px solid #777;border-radius:2px"></div><div class="a" style="left:36px;top:163px;width:10px;height:2px;background:#e8b820"></div>
<div class="a" style="left:33px;top:178px;width:16px;height:16px;border-radius:8px;background:radial-gradient(circle at 60% 40%,#3f6fc4 0,#2a4f9e 45%,#f08a1c 50%,#d8560e 100%)"></div>
<div class="a" style="left:33px;top:200px;width:16px;height:15px;background:#e4e4e4;border:1px solid #a8a8a8;border-radius:3px"></div><div class="a" style="left:36px;top:203px;width:10px;height:1px;background:#aaa;box-shadow:0 3px #aaa,0 6px #aaa"></div>
<div class="a" style="left:33px;top:224px;width:16px;height:11px;background:linear-gradient(#9dc470,#6f9946 70%,#3a3a3a 70%)"></div>
<div class="a" style="left:33px;top:244px;width:16px;height:16px;background:#c4141a;border:1px dotted #f3b0b0;color:#fff;font:bold italic 11px/14px 'DejaVu Sans',sans-serif;overflow:hidden">Fz</div>
<div class="a" style="left:33px;top:266px;width:16px;height:15px;background:#e4e4e4;border:1px solid #a8a8a8;border-radius:3px"></div><div class="a" style="left:36px;top:269px;width:10px;height:1px;background:#aaa;box-shadow:0 3px #aaa,0 6px #aaa"></div>
<div class="a" style="left:33px;top:288px;width:16px;height:15px;background:#d9dde4;border:1px dotted #9aa"></div><div class="a" style="left:36px;top:290px;width:10px;height:10px;border-radius:5px;background:radial-gradient(circle at 40% 40%,#f0c8a0 0,#e8b080 35%,#2d5fa8 45%)"></div>
<div class="a" style="left:33px;top:310px;width:16px;height:16px;background:#c4141a;border:1px dotted #f3b0b0;color:#fff;font:bold italic 11px/14px 'DejaVu Sans',sans-serif;overflow:hidden">Fz</div>
<div class="a" style="left:33px;top:332px;width:16px;height:15px;background:#e4e4e4;border:1px solid #a8a8a8;border-radius:3px"></div><div class="a" style="left:36px;top:335px;width:10px;height:1px;background:#aaa;box-shadow:0 3px #aaa,0 6px #aaa"></div>
<div class="a" style="left:33px;top:354px;width:16px;height:15px;background:#e4e4e4;border:1px solid #a8a8a8;border-radius:3px"></div><div class="a" style="left:36px;top:357px;width:10px;height:1px;background:#aaa;box-shadow:0 3px #aaa,0 6px #aaa"></div>
<div class="a" style="left:33px;top:376px;width:16px;height:15px;background:#e4e4e4;border:1px solid #a8a8a8;border-radius:3px"></div><div class="a" style="left:36px;top:379px;width:10px;height:1px;background:#aaa;box-shadow:0 3px #aaa,0 6px #aaa"></div>
<div class="a" style="left:33px;top:398px;width:16px;height:15px;background:#e4e4e4;border:1px solid #a8a8a8;border-radius:3px"></div><div class="a" style="left:36px;top:401px;width:10px;height:1px;background:#aaa;box-shadow:0 3px #aaa,0 6px #aaa"></div>
<div class="a" style="left:33px;top:420px;width:16px;height:15px;background:#e4e4e4;border:1px solid #a8a8a8;border-radius:3px"></div><div class="a" style="left:36px;top:423px;width:10px;height:1px;background:#aaa;box-shadow:0 3px #aaa,0 6px #aaa"></div>
</div></div>
<div class="win" style="left:1300px;top:2px;width:537px;height:40px">
<div class="ttl" style="left:auto;right:258px;top:3px;transform:none">Mozilla Firefox</div>
<svg class="a" style="left:472px;top:7px" width="10" height="10"><path d="M1 6.5h8" stroke="#b2b2b2" stroke-width="1.8"/></svg><svg class="a" style="left:493px;top:7px" width="10" height="10"><path d="M1 5h8M5 1v8" stroke="#b2b2b2" stroke-width="1.8"/></svg><svg class="a" style="left:515px;top:7px" width="10" height="10"><path d="M1.5 1.5l7 7M8.5 1.5l-7 7" stroke="#b2b2b2" stroke-width="2"/></svg>
</div>
<div class="win" style="left:74px;top:2px;width:1410px;height:1004px">
<div class="a" style="left:0;top:42px;width:1410px;height:34px;background:linear-gradient(#d6d6d6,#c1c1c1)"></div>
<div class="a" style="left:0;top:76px;width:1410px;height:1px;background:#9f9f9f"></div><div class="a" style="left:0;top:77px;width:1410px;height:1px;background:#e6e6e6"></div>
<svg class="a" style="left:10px;top:8px" width="10" height="7"><path d="M.6 0L9.2 0L4.9 5.8Z" fill="#ababab"/></svg>
<div class="ttl" style="left:682px;top:3px">Maison_mere - tntbnet@databit.me - FileZilla</div>
<svg class="a" style="left:1345px;top:7px" width="10" height="10"><path d="M1 6.5h8" stroke="#b2b2b2" stroke-width="1.8"/></svg><svg class="a" style="left:1366px;top:7px" width="10" height="10"><path d="M1 5h8M5 1v8" stroke="#b2b2b2" stroke-width="1.8"/></svg><svg class="a" style="left:1388px;top:7px" width="10" height="10"><path d="M1.5 1.5l7 7M8.5 1.5l-7 7" stroke="#b2b2b2" stroke-width="2"/></svg>
<div class="t" style="left:8px;top:23px;color:#222">Fichier</div><div class="t" style="left:59px;top:23px;color:#222">Édition</div><div class="t" style="left:113px;top:23px;color:#222">Affichage</div><div class="t" style="left:182px;top:23px;color:#222">Transfert</div><div class="t" style="left:246px;top:23px;color:#222">Serveur</div><div class="t" style="left:305px;top:23px;color:#222">Favoris</div><div class="t" style="left:357px;top:23px;color:#222">?</div>
<svg class="a" style="left:11px;top:51px" width="16" height="16" viewBox="0 0 16 16"><path d="M1.2 4.6 L3.4 3.6 L4.4 5 L6.4 4.2 L6.8 6.8 L5.6 8 L6.8 9.6 L6.6 13.4 L3.6 14.2 L2.6 12.4 L1 13.2 L1.6 9.8 L.6 8Z" fill="#a4cc94" stroke="#7aa86c" stroke-width=".5"/><rect x="6.8" y="1" width="7.4" height="11.4" rx=".8" fill="#4f7fd0" stroke="#3a65a8" stroke-width=".5"/><rect x="8" y="1.6" width="2.2" height="10" fill="#b4ccf0"/><rect x="11" y="1.6" width="2.2" height="10" fill="#9cbcec"/><rect x="9.8" y="12.4" width="1.6" height="1.6" fill="#444"/><rect x="6" y="13.8" width="9.4" height="1.4" fill="#3c3c3c"/></svg>
<svg class="a" style="left:40px;top:57px" width="10" height="6" viewBox="0 0 10 6"><path d="M0 0L10 0L5 5.5Z" fill="#151515"/></svg>
<div class="sep" style="left:62px;top:50px;height:17px"></div>
<div class="tgl" style="left:70px;top:46px"></div>
<svg class="a" style="left:74px;top:51px" width="16" height="16" viewBox="0 0 16 16"><rect x="2" y="1.5" width="10.5" height="13.5" fill="#fbfbfb" stroke="#9a9a9a" stroke-width=".7"/><path d="M3.5 3.5h7.5M3.5 5.5h7.5M3.5 7.5h7.5M3.5 9.5h7.5M3.5 11.5h7.5M3.5 13.5h7.5" stroke="#9c9c9c" stroke-width="1"/><path d="M13.8 1.2 L15.2 2 L8.6 14.6 L7 15.6 L7.2 13.8Z" fill="#f0a81c" stroke="#9a6308" stroke-width=".5"/><path d="M13.8 1.2 L15.2 2 L14.6 3.2 L13.2 2.4Z" fill="#d4422a"/></svg>
<div class="tgl" style="left:96px;top:46px"></div>
<svg class="a" style="left:100px;top:51px" width="16" height="16" viewBox="0 0 16 16"><rect x="1" y="2" width="14.5" height="12" fill="#fdfdfd" stroke="#9a9aa8" stroke-width=".7"/><rect x="1" y="2" width="14.5" height="2.2" fill="#aeb6c6"/><path d="M6.8 3.8V14" stroke="#b4b4c0" stroke-width=".7"/><rect x="3" y="5.3" width="2.6" height="2.6" fill="#5b8fde"/><rect x="3" y="9.8" width="2.6" height="2.6" fill="#d9463f"/><path d="M8 6.5h6.5M8 9h6.5M8 11.5h6.5" stroke="#c9c9d2" stroke-width=".8"/></svg>
<div class="tgl" style="left:122px;top:46px"></div>
<svg class="a" style="left:126px;top:51px" width="16" height="16" viewBox="0 0 16 16"><circle cx="7" cy="6.5" r="5.6" fill="#4d86dd" stroke="#2f62b6" stroke-width=".6"/><path d="M4 4.2 Q7 1.6 10 3.4" stroke="#b9d3f6" stroke-width="1.4" fill="none"/><rect x="4.5" y="7" width="11" height="8" fill="#fdfdfd" stroke="#9a9aa8" stroke-width=".7"/><rect x="4.5" y="7" width="11" height="1.6" fill="#c5cbd6"/><rect x="6" y="9.6" width="1.8" height="1.8" fill="#5b8fde"/><rect x="6" y="12.2" width="1.8" height="1.8" fill="#d9463f"/><path d="M8.8 8.6V15" stroke="#b4b4c0" stroke-width=".6"/></svg>
<div class="tgl" style="left:148px;top:46px"></div>
<svg class="a" style="left:152px;top:51px" width="16" height="16" viewBox="0 0 16 16"><path d="M6 3.2 L11 3.2 L11 1 L15.6 4.6 L11 8.2 L11 6 L6 6Z" fill="#35b535" stroke="#1c7d1c" stroke-width=".6"/><path d="M1 10.2 L6 10.2 L6 8 L10.6 11.6 L6 15.2 L6 13 L1 13Z" fill="#35b535" stroke="#1c7d1c" stroke-width=".6"/></svg>
<div class="sep" style="left:178px;top:50px;height:17px"></div>
<svg class="a" style="left:190px;top:51px" width="16" height="16" viewBox="0 0 16 16"><path d="M1.5 7.5 L1.5 3.5 L10 3.5 L10 1 L15.3 5 L10 9 L10 6.5 L4.5 6.5 L4.5 7.5Z" fill="#2c7fe6" stroke="#1555ad" stroke-width=".6"/><path d="M14.5 8.5 L14.5 12.5 L6 12.5 L6 15 L.7 11 L6 7 L6 9.5 L11.5 9.5 L11.5 8.5Z" fill="#2fb83a" stroke="#188024" stroke-width=".6"/></svg>
<svg class="a" style="left:216px;top:51px" width="16" height="16" viewBox="0 0 16 16"><rect x="1.5" y="1.5" width="2.6" height="13" fill="#cfe0f6" stroke="#8fb0e0" stroke-width=".5"/><rect x="5" y="1.5" width="2.2" height="13" fill="#6fa0e6"/><rect x="12" y="1.5" width="2.6" height="13" fill="#dfe6f0" stroke="#b9c6dc" stroke-width=".5"/><path d="M8 1 L11 1 L11 8.5 L13.6 8.5 L9.5 15.4 L5.4 8.5 L8 8.5Z" fill="#2fb83a" stroke="#188024" stroke-width=".6"/><path d="M1 8h4" stroke="#fff" stroke-width="1.2"/><path d="M12 8h3" stroke="#fff" stroke-width="1.2"/></svg>
<svg class="a" style="left:242px;top:51px" width="16" height="16" viewBox="0 0 16 16"><path d="M1.6 1.5V15.5" stroke="#d2d2d2" stroke-width="1"/><path d="M1.8 1.6 Q5 .6 7.5 2 Q10.5 3.4 13.6 2.4 L13.2 10.4 Q10 11.6 7.4 10.2 Q4.6 8.8 1.8 9.8Z" fill="#cbcbcb" stroke="#bdbdbd" stroke-width=".5"/><path d="M5.4 3.8 L10 8.4 M10 3.8 L5.4 8.4" stroke="#efefef" stroke-width="2"/></svg>
<svg class="a" style="left:268px;top:51px" width="16" height="16" viewBox="0 0 16 16"><rect x="4" y=".6" width="2.4" height="3" fill="#7a7a7a"/><rect x="1.2" y="3" width="8" height="10.5" rx="2.6" fill="#8e8e8e" stroke="#6e6e6e" stroke-width=".7"/><path d="M2 7h6.4" stroke="#a8a8a8" stroke-width="1"/><path d="M6.4 8.4 L14 15 M14 8.4 L6.4 15" stroke="#e3121c" stroke-width="3" stroke-linecap="round"/><path d="M6.8 8.6 L9 10.6 M13.6 8.6 L11.4 10.6" stroke="#f46a70" stroke-width="1.2" stroke-linecap="round"/></svg>
<svg class="a" style="left:294px;top:51px" width="16" height="16" viewBox="0 0 16 16"><path d="M1.2 7.6 L8.2 2.2 L9.6 1 L10.6 2.6 L14.8 5 L8.4 13.6Z" fill="#c9c9c9" stroke="#b6b6b6" stroke-width=".6"/><path d="M4.4 8 L7.4 11.2 L13.4 4.2" stroke="#e4e4e4" stroke-width="2" fill="none"/><path d="M6 13 L7 15.6" stroke="#bdbdbd" stroke-width="1.2"/></svg>
<div class="sep" style="left:321px;top:50px;height:17px"></div>
<svg class="a" style="left:331px;top:51px" width="16" height="16" viewBox="0 0 16 16"><rect x=".8" y="1.5" width="14.6" height="12.6" fill="#fbfbfd" stroke="#8a90a0" stroke-width=".8"/><rect x=".8" y="1.5" width="14.6" height="1.8" fill="#c3c9d6"/><path d="M8 1.5V14" stroke="#7a8294" stroke-width=".8"/><path d="M2.4 5.4h5" stroke="#4cc04c" stroke-width="1.3"/><path d="M2.4 7.8h5" stroke="#e8483c" stroke-width="1.3"/><path d="M2.4 10.2h5" stroke="#ecd02c" stroke-width="1.3"/><path d="M2.4 12.4h5" stroke="#4a8cec" stroke-width="1.3"/><path d="M9 5.4h5" stroke="#a4e0a4" stroke-width="1.3"/><path d="M9 7.8h5" stroke="#f4b0aa" stroke-width="1.3"/><path d="M9 10.2h5" stroke="#f4e8a0" stroke-width="1.3"/><path d="M9 12.4h5" stroke="#a8c8f4" stroke-width="1.3"/></svg>
<svg class="a" style="left:358px;top:51px" width="16" height="16" viewBox="0 0 16 16"><path d="M10.4 .8 L13.6 .4 L14.2 7.6 L11 8Z" fill="#e0444c" stroke="#f0a0a4" stroke-width=".6"/><path d="M.8 8.6 L4 8.6 L4 15 L.8 15Z" fill="#ececec" stroke="#c4c4c4" stroke-width=".5"/><path d="M4.6 10 L7 10 L7 12.4 L8 12.4 L5.8 15.2 L3.6 12.4 L4.6 12.4Z" fill="#4a8ade"/><circle cx="6.4" cy="5.8" r="4.4" fill="#d4e4f6" stroke="#8a94a8" stroke-width="1.1"/><path d="M4 4.4 Q5.6 2.6 7.6 3" stroke="#fff" stroke-width="1" fill="none"/><path d="M9.4 9.2 L14.2 14.8" stroke="#5a5a5a" stroke-width="1.5" stroke-linecap="round"/></svg>
<div class="t" style="left:7px;top:87px">Hôte :</div>
<div class="inp" style="left:50px;top:84px;width:108px;height:22px"></div>
<div class="t" style="left:169px;top:87px">Identifiant :</div>
<div class="inp" style="left:247px;top:84px;width:90px;height:22px"></div>
<div class="t" style="left:348px;top:87px">Mot de passe :</div>
<div class="pan" style="left:3px;top:113px;width:1391px;height:97px;background:#fbfbfb;overflow:hidden">
<div class="t" style="left:1px;top:-5px;color:#1a1a1a">Statut :&nbsp;&nbsp;&nbsp;&nbsp;&nbsp;&nbsp;&nbsp;&nbsp;Récupération du contenu du dossier « /www/nextcloud/data »...</div>
<div class="t" style="left:1px;top:9px;color:#1a1a1a">Statut :&nbsp;&nbsp;&nbsp;&nbsp;&nbsp;&nbsp;&nbsp;&nbsp;Contenu du dossier « /www/nextcloud/data » affiché avec succès</div>
<div class="t" style="left:1px;top:23px;color:#1a1a1a">Statut :&nbsp;&nbsp;&nbsp;&nbsp;&nbsp;&nbsp;&nbsp;&nbsp;Récupération du contenu du dossier...</div>
<div class="t" style="left:1px;top:37px;color:#1a1a1a">Statut :&nbsp;&nbsp;&nbsp;&nbsp;&nbsp;&nbsp;&nbsp;&nbsp;Contenu du dossier affiché avec succès</div>
<div class="t" style="left:1px;top:51px;color:#1a1a1a">Statut :&nbsp;&nbsp;&nbsp;&nbsp;&nbsp;&nbsp;&nbsp;&nbsp;Déconnecté du serveur</div>
<div class="t" style="left:1px;top:65px;color:#1a1a1a">Statut :&nbsp;&nbsp;&nbsp;&nbsp;&nbsp;&nbsp;&nbsp;&nbsp;Connexion à databit.me...</div>
<div class="t" style="left:1px;top:79px;color:#1a1a1a">Statut :&nbsp;&nbsp;&nbsp;&nbsp;&nbsp;&nbsp;&nbsp;&nbsp;Connexion établie, attente du message d'accueil...</div>
</div>
<div class="pan" style="left:4px;top:218px;width:400px;height:98px;background:#f6f6f6"></div>
<div class="a" style="left:5px;top:219px;width:398px;height:38px;background:#dedede;border-bottom:1px solid #1a1a1a;border-radius:3px 3px 0 0"></div>
<div class="t" style="left:10px;top:229px">Site local :</div>
<div class="pan" style="left:4px;top:324px;width:400px;height:433px;background:#f6f6f6"></div>
<div class="hdr" style="left:5px;top:325px;width:398px;height:23px;border-radius:3px 3px 0 0"></div>
<div class="t" style="left:11px;top:329px">Nom de fichier</div>
<svg class="a" style="left:8px;top:351px" width="16" height="16" viewBox="0 0 16 16"><path d="M2 4 L5 2 L14 2 L14 12 L4 14 L2 12Z" fill="#5b9bee"/><path d="M2 4 L5 2 L14 2 L13 4 L4 5Z" fill="#a9cdf8"/><path d="M2 4 L4 5 L4 14 L2 12Z" fill="#3f7fd8"/></svg>
<div class="a" style="left:8px;top:374px;width:13px;height:15px;background:#fafafa;border:1px solid #b5b5b5"></div>
<svg class="a" style="left:8px;top:395px" width="16" height="16" viewBox="0 0 16 16"><path d="M2 4 L5 2 L14 2 L14 12 L4 14 L2 12Z" fill="#5b9bee"/><path d="M2 4 L5 2 L14 2 L13 4 L4 5Z" fill="#a9cdf8"/><path d="M2 4 L4 5 L4 14 L2 12Z" fill="#3f7fd8"/></svg>
<svg class="a" style="left:8px;top:417px" width="16" height="16" viewBox="0 0 16 16"><path d="M2 4 L5 2 L14 2 L14 12 L4 14 L2 12Z" fill="#5b9bee"/><path d="M2 4 L5 2 L14 2 L13 4 L4 5Z" fill="#a9cdf8"/><path d="M2 4 L4 5 L4 14 L2 12Z" fill="#3f7fd8"/></svg>
<svg class="a" style="left:8px;top:439px" width="16" height="16" viewBox="0 0 16 16"><path d="M2 4 L5 2 L14 2 L14 12 L4 14 L2 12Z" fill="#5b9bee"/><path d="M2 4 L5 2 L14 2 L13 4 L4 5Z" fill="#a9cdf8"/><path d="M2 4 L4 5 L4 14 L2 12Z" fill="#3f7fd8"/></svg>
<svg class="a" style="left:8px;top:461px" width="16" height="16" viewBox="0 0 16 16"><path d="M2 4 L5 2 L14 2 L14 12 L4 14 L2 12Z" fill="#5b9bee"/><path d="M2 4 L5 2 L14 2 L13 4 L4 5Z" fill="#a9cdf8"/><path d="M2 4 L4 5 L4 14 L2 12Z" fill="#3f7fd8"/></svg>
<div class="sbt" style="left:7px;top:723px;width:150px;height:10px"></div>
<div class="a" style="left:5px;top:738px;width:398px;height:18px;background:#d9d9d9;border-top:1px solid #b0b0b0"></div>
<div class="t" style="left:10px;top:738px">1 fichier</div>
<div class="pan" style="left:8px;top:770px;width:1380px;height:148px;background:#f6f6f6"></div>
<div class="hdr" style="left:9px;top:771px;width:1378px;height:22px"></div>
<div class="t" style="left:16px;top:775px">Serveur / Fichier local</div>
<div class="sbt" style="left:9px;top:921px;width:150px;height:10px"></div>
<div class="a" style="left:4px;top:935px;width:1395px;height:1px;background:#7c7c7c"></div>
<div class="a" style="left:8px;top:935px;width:205px;height:30px;background:#ebebeb;border:1px solid #9c9c9c;border-top:none;border-radius:0 0 4px 4px;box-shadow:0 1px 0 #c4c4c4"></div>
<div class="t" style="left:13px;top:944px">Fichiers en file d'attente</div>
<div class="a" style="left:215px;top:937px;width:157px;height:24px;background:linear-gradient(#d2d2d2,#dadada);border:1px solid #a9a9a9;border-top:none;border-radius:0 0 4px 4px"></div>
<div class="t" style="left:220px;top:941px">Transferts échoués</div>
<div class="a" style="left:374px;top:937px;width:150px;height:24px;background:linear-gradient(#d2d2d2,#dadada);border:1px solid #a9a9a9;border-top:none;border-radius:0 0 4px 4px"></div>
<div class="a" style="left:0;top:988px;width:1410px;height:13px;background:#e6e9e6;border-top:1px solid #bdbdbd"></div>
<div class="a" style="left:7px;top:990px;width:9px;height:5px;border:1px solid #777;background:#eee"></div>
</div>
<div class="win" style="left:451px;top:30px;width:1410px;height:991px">
<div class="a" style="left:0;top:42px;width:1410px;height:34px;background:linear-gradient(#d6d6d6,#c1c1c1)"></div>
<div class="a" style="left:0;top:76px;width:1410px;height:1px;background:#9f9f9f"></div><div class="a" style="left:0;top:77px;width:1410px;height:1px;background:#e6e6e6"></div>
<svg class="a" style="left:10px;top:8px" width="10" height="7"><path d="M.6 0L9.2 0L4.9 5.8Z" fill="#ababab"/></svg>
<div class="ttl" style="left:682px;top:3px">Maison_mere - tntbnet@databit.me - FileZilla</div>
<svg class="a" style="left:1345px;top:7px" width="10" height="10"><path d="M1 6.5h8" stroke="#b2b2b2" stroke-width="1.8"/></svg><svg class="a" style="left:1367px;top:7px" width="10" height="10"><path d="M1 5h8M5 1v8" stroke="#b2b2b2" stroke-width="1.8"/></svg><svg class="a" style="left:1388px;top:7px" width="10" height="10"><path d="M1.5 1.5l7 7M8.5 1.5l-7 7" stroke="#b2b2b2" stroke-width="2"/></svg>
<div class="t" style="left:8px;top:23px;color:#222">Fichier</div><div class="t" style="left:59px;top:23px;color:#222">Édition</div><div class="t" style="left:113px;top:23px;color:#222">Affichage</div><div class="t" style="left:181px;top:23px;color:#222">Transfert</div><div class="t" style="left:246px;top:23px;color:#222">Serveur</div><div class="t" style="left:305px;top:23px;color:#222">Favoris</div><div class="t" style="left:358px;top:23px;color:#222">?</div>
<svg class="a" style="left:11px;top:51px" width="16" height="16" viewBox="0 0 16 16"><path d="M1.2 4.6 L3.4 3.6 L4.4 5 L6.4 4.2 L6.8 6.8 L5.6 8 L6.8 9.6 L6.6 13.4 L3.6 14.2 L2.6 12.4 L1 13.2 L1.6 9.8 L.6 8Z" fill="#a4cc94" stroke="#7aa86c" stroke-width=".5"/><rect x="6.8" y="1" width="7.4" height="11.4" rx=".8" fill="#4f7fd0" stroke="#3a65a8" stroke-width=".5"/><rect x="8" y="1.6" width="2.2" height="10" fill="#b4ccf0"/><rect x="11" y="1.6" width="2.2" height="10" fill="#9cbcec"/><rect x="9.8" y="12.4" width="1.6" height="1.6" fill="#444"/><rect x="6" y="13.8" width="9.4" height="1.4" fill="#3c3c3c"/></svg>
<svg class="a" style="left:40px;top:57px" width="10" height="6" viewBox="0 0 10 6"><path d="M0 0L10 0L5 5.5Z" fill="#151515"/></svg>
<div class="sep" style="left:62px;top:50px;height:17px"></div>
<div class="tgl" style="left:70px;top:46px"></div>
<svg class="a" style="left:74px;top:51px" width="16" height="16" viewBox="0 0 16 16"><rect x="2" y="1.5" width="10.5" height="13.5" fill="#fbfbfb" stroke="#9a9a9a" stroke-width=".7"/><path d="M3.5 3.5h7.5M3.5 5.5h7.5M3.5 7.5h7.5M3.5 9.5h7.5M3.5 11.5h7.5M3.5 13.5h7.5" stroke="#9c9c9c" stroke-width="1"/><path d="M13.8 1.2 L15.2 2 L8.6 14.6 L7 15.6 L7.2 13.8Z" fill="#f0a81c" stroke="#9a6308" stroke-width=".5"/><path d="M13.8 1.2 L15.2 2 L14.6 3.2 L13.2 2.4Z" fill="#d4422a"/></svg>
<div class="tgl" style="left:96px;top:46px"></div>
<svg class="a" style="left:100px;top:51px" width="16" height="16" viewBox="0 0 16 16"><rect x="1" y="2" width="14.5" height="12" fill="#fdfdfd" stroke="#9a9aa8" stroke-width=".7"/><rect x="1" y="2" width="14.5" height="2.2" fill="#aeb6c6"/><path d="M6.8 3.8V14" stroke="#b4b4c0" stroke-width=".7"/><rect x="3" y="5.3" width="2.6" height="2.6" fill="#5b8fde"/><rect x="3" y="9.8" width="2.6" height="2.6" fill="#d9463f"/><path d="M8 6.5h6.5M8 9h6.5M8 11.5h6.5" stroke="#c9c9d2" stroke-width=".8"/></svg>
<div class="tgl" style="left:122px;top:46px"></div>
<svg class="a" style="left:126px;top:51px" width="16" height="16" viewBox="0 0 16 16"><circle cx="7" cy="6.5" r="5.6" fill="#4d86dd" stroke="#2f62b6" stroke-width=".6"/><path d="M4 4.2 Q7 1.6 10 3.4" stroke="#b9d3f6" stroke-width="1.4" fill="none"/><rect x="4.5" y="7" width="11" height="8" fill="#fdfdfd" stroke="#9a9aa8" stroke-width=".7"/><rect x="4.5" y="7" width="11" height="1.6" fill="#c5cbd6"/><rect x="6" y="9.6" width="1.8" height="1.8" fill="#5b8fde"/><rect x="6" y="12.2" width="1.8" height="1.8" fill="#d9463f"/><path d="M8.8 8.6V15" stroke="#b4b4c0" stroke-width=".6"/></svg>
<div class="tgl" style="left:148px;top:46px"></div>
<svg class="a" style="left:152px;top:51px" width="16" height="16" viewBox="0 0 16 16"><path d="M6 3.2 L11 3.2 L11 1 L15.6 4.6 L11 8.2 L11 6 L6 6Z" fill="#35b535" stroke="#1c7d1c" stroke-width=".6"/><path d="M1 10.2 L6 10.2 L6 8 L10.6 11.6 L6 15.2 L6 13 L1 13Z" fill="#35b535" stroke="#1c7d1c" stroke-width=".6"/></svg>
<div class="sep" style="left:178px;top:50px;height:17px"></div>
<svg class="a" style="left:190px;top:51px" width="16" height="16" viewBox="0 0 16 16"><path d="M1.5 7.5 L1.5 3.5 L10 3.5 L10 1 L15.3 5 L10 9 L10 6.5 L4.5 6.5 L4.5 7.5Z" fill="#2c7fe6" stroke="#1555ad" stroke-width=".6"/><path d="M14.5 8.5 L14.5 12.5 L6 12.5 L6 15 L.7 11 L6 7 L6 9.5 L11.5 9.5 L11.5 8.5Z" fill="#2fb83a" stroke="#188024" stroke-width=".6"/></svg>
<svg class="a" style="left:216px;top:51px" width="16" height="16" viewBox="0 0 16 16"><rect x="1.5" y="1.5" width="2.6" height="13" fill="#cfe0f6" stroke="#8fb0e0" stroke-width=".5"/><rect x="5" y="1.5" width="2.2" height="13" fill="#6fa0e6"/><rect x="12" y="1.5" width="2.6" height="13" fill="#dfe6f0" stroke="#b9c6dc" stroke-width=".5"/><path d="M8 1 L11 1 L11 8.5 L13.6 8.5 L9.5 15.4 L5.4 8.5 L8 8.5Z" fill="#2fb83a" stroke="#188024" stroke-width=".6"/><path d="M1 8h4" stroke="#fff" stroke-width="1.2"/><path d="M12 8h3" stroke="#fff" stroke-width="1.2"/></svg>
<svg class="a" style="left:242px;top:51px" width="16" height="16" viewBox="0 0 16 16"><path d="M1.6 1.5V15.5" stroke="#d2d2d2" stroke-width="1"/><path d="M1.8 1.6 Q5 .6 7.5 2 Q10.5 3.4 13.6 2.4 L13.2 10.4 Q10 11.6 7.4 10.2 Q4.6 8.8 1.8 9.8Z" fill="#cbcbcb" stroke="#bdbdbd" stroke-width=".5"/><path d="M5.4 3.8 L10 8.4 M10 3.8 L5.4 8.4" stroke="#efefef" stroke-width="2"/></svg>
<svg class="a" style="left:268px;top:51px" width="16" height="16" viewBox="0 0 16 16"><rect x="4" y=".6" width="2.4" height="3" fill="#7a7a7a"/><rect x="1.2" y="3" width="8" height="10.5" rx="2.6" fill="#8e8e8e" stroke="#6e6e6e" stroke-width=".7"/><path d="M2 7h6.4" stroke="#a8a8a8" stroke-width="1"/><path d="M6.4 8.4 L14 15 M14 8.4 L6.4 15" stroke="#e3121c" stroke-width="3" stroke-linecap="round"/><path d="M6.8 8.6 L9 10.6 M13.6 8.6 L11.4 10.6" stroke="#f46a70" stroke-width="1.2" stroke-linecap="round"/></svg>
<svg class="a" style="left:294px;top:51px" width="16" height="16" viewBox="0 0 16 16"><path d="M1.2 7.6 L8.2 2.2 L9.6 1 L10.6 2.6 L14.8 5 L8.4 13.6Z" fill="#c9c9c9" stroke="#b6b6b6" stroke-width=".6"/><path d="M4.4 8 L7.4 11.2 L13.4 4.2" stroke="#e4e4e4" stroke-width="2" fill="none"/><path d="M6 13 L7 15.6" stroke="#bdbdbd" stroke-width="1.2"/></svg>
<div class="sep" style="left:321px;top:50px;height:17px"></div>
<svg class="a" style="left:331px;top:51px" width="16" height="16" viewBox="0 0 16 16"><rect x=".8" y="1.5" width="14.6" height="12.6" fill="#fbfbfd" stroke="#8a90a0" stroke-width=".8"/><rect x=".8" y="1.5" width="14.6" height="1.8" fill="#c3c9d6"/><path d="M8 1.5V14" stroke="#7a8294" stroke-width=".8"/><path d="M2.4 5.4h5" stroke="#4cc04c" stroke-width="1.3"/><path d="M2.4 7.8h5" stroke="#e8483c" stroke-width="1.3"/><path d="M2.4 10.2h5" stroke="#ecd02c" stroke-width="1.3"/><path d="M2.4 12.4h5" stroke="#4a8cec" stroke-width="1.3"/><path d="M9 5.4h5" stroke="#a4e0a4" stroke-width="1.3"/><path d="M9 7.8h5" stroke="#f4b0aa" stroke-width="1.3"/><path d="M9 10.2h5" stroke="#f4e8a0" stroke-width="1.3"/><path d="M9 12.4h5" stroke="#a8c8f4" stroke-width="1.3"/></svg>
<svg class="a" style="left:358px;top:51px" width="16" height="16" viewBox="0 0 16 16"><path d="M10.4 .8 L13.6 .4 L14.2 7.6 L11 8Z" fill="#e0444c" stroke="#f0a0a4" stroke-width=".6"/><path d="M.8 8.6 L4 8.6 L4 15 L.8 15Z" fill="#ececec" stroke="#c4c4c4" stroke-width=".5"/><path d="M4.6 10 L7 10 L7 12.4 L8 12.4 L5.8 15.2 L3.6 12.4 L4.6 12.4Z" fill="#4a8ade"/><circle cx="6.4" cy="5.8" r="4.4" fill="#d4e4f6" stroke="#8a94a8" stroke-width="1.1"/><path d="M4 4.4 Q5.6 2.6 7.6 3" stroke="#fff" stroke-width="1" fill="none"/><path d="M9.4 9.2 L14.2 14.8" stroke="#5a5a5a" stroke-width="1.5" stroke-linecap="round"/></svg>
<svg class="a" style="left:384px;top:51px" width="16" height="16" viewBox="0 0 16 16"><path d="M1 6.4 L5.6 6.4 L7.4 8.2 L7.4 15.4 L1 15.4Z" fill="#eef2f8" stroke="#a8b8d0" stroke-width=".6"/><path d="M4.6 8.4 L7.4 8.4 L7.4 15.4 L4.6 15.4Z" fill="#4a8ade"/><path d="M2 2.4 L10 2.4 L10 .4 L15.2 3.6 L10 6.8 L10 4.8 L2 4.8Z" fill="#3cb83c" stroke="#1c8a1c" stroke-width=".4"/><path d="M14.6 7.2 L8.6 7.2 L8.6 5.6 L4 8.6 L8.6 11.6 L8.6 9.8 L14.6 9.8Z" fill="#f09428" stroke="#b86410" stroke-width=".4"/></svg>
<svg class="a" style="left:410px;top:51px" width="16" height="16" viewBox="0 0 16 16"><path d="M2.6 3.5 Q4.6 .8 6.8 3 L7.2 8 L8.8 8 L9.2 3 Q11.4 .8 13.4 3.5 L15.4 11.6 Q15.6 14.6 12.6 14.8 Q9.8 14.8 9.6 12 L9.4 10 L6.6 10 L6.4 12 Q6.2 14.8 3.4 14.8 Q.4 14.6 .6 11.6Z" fill="#2a2a2a"/><ellipse cx="3.5" cy="12.6" rx="2.1" ry="1.5" fill="#e04a2a"/><ellipse cx="12.5" cy="12.6" rx="2.1" ry="1.5" fill="#e04a2a"/><path d="M3.4 4 L2 10" stroke="#6a6a6a" stroke-width=".8"/><path d="M12.6 4 L14 10" stroke="#6a6a6a" stroke-width=".8"/></svg>
<div class="inp" style="left:50px;top:84px;width:108px;height:22px"></div>
<div class="inp" style="left:246px;top:84px;width:90px;height:22px"></div>
<div class="inp" style="left:442px;top:84px;width:90px;height:22px"></div>
<div class="inp" style="left:582px;top:84px;width:45px;height:22px"></div>
<div class="a" style="left:639px;top:81px;width:115px;height:26px;border:2px solid #9ccb74;border-radius:5px;background:#efefef"></div>
<div class="a" style="left:755px;top:83px;width:14px;height:24px;border:1px solid #b0b0b0;border-radius:4px;background:#e9e9e9"></div>
<div class="pan" style="left:8px;top:113px;width:1398px;height:95px;background:#f7f7f7"></div>
<div class="a" style="left:1390px;top:114px;width:15px;height:93px;background:linear-gradient(90deg,#d2d2d2,#e6e6e6 45%)"></div>
<div class="sbt" style="left:1393px;top:179px;width:9px;height:27px"></div>
<div class="pan" style="left:708px;top:218px;width:698px;height:184px;background:#f7f7f7"></div>
<div class="a" style="left:709px;top:219px;width:696px;height:38px;background:#dcdcdc;border-bottom:1px solid #1a1a1a;border-radius:3px 3px 0 0"></div>
<div class="inp" style="left:848px;top:227px;width:529px;height:24px;border-radius:4px 0 0 4px"></div>
<div class="a" style="left:1377px;top:227px;width:23px;height:24px;border:1px solid #a0a0a0;border-radius:0 4px 4px 0;background:linear-gradient(#f0f0f0,#d8d8d8)"></div>
<svg class="a" style="left:1384px;top:236px" width="9" height="6" viewBox="0 0 9 6"><path d="M0 0L9 0L4.5 5.5Z" fill="#1a1a1a"/></svg>
<div class="a" style="left:1390px;top:258px;width:15px;height:143px;background:linear-gradient(90deg,#d2d2d2,#e6e6e6 45%)"></div>
<div class="sbt" style="left:1393px;top:343px;width:9px;height:30px"></div>
<div class="pan" style="left:708px;top:410px;width:698px;height:345px;background:#dadada"></div>
<div class="hdr" style="left:709px;top:411px;width:681px;height:23px"></div>
<div class="t" style="right:28px;top:415px">Permission</div>
<div class="a" style="left:709px;top:434px;width:681px;height:22px;background:linear-gradient(#9cbd7a,#8cb066 50%,#7fa559);border-bottom:1px solid #b4b8a8;border-top:1px solid #a9c68a;color:#f0f5e8"><span class="t" style="right:12px;top:2px">23</span></div>
<div class="a" style="left:709px;top:456px;width:681px;height:22px;background:linear-gradient(#9cbd7a,#8cb066 50%,#7fa559);border-bottom:1px solid #b4b8a8;border-top:1px solid #a9c68a;color:#f0f5e8"><span class="t" style="right:12px;top:2px">03</span></div>
<div class="a" style="left:709px;top:478px;width:681px;height:22px;background:linear-gradient(#9cbd7a,#8cb066 50%,#7fa559);border-bottom:1px solid #b4b8a8;border-top:1px solid #a9c68a;color:#f0f5e8"><span class="t" style="right:12px;top:2px">20</span></div>
<div class="a" style="left:709px;top:500px;width:681px;height:22px;background:linear-gradient(#9cbd7a,#8cb066 50%,#7fa559);border-bottom:1px solid #b4b8a8;border-top:1px solid #a9c68a;color:#f0f5e8"><span class="t" style="right:12px;top:2px">13</span></div>
<div class="a" style="left:709px;top:522px;width:681px;height:22px;background:linear-gradient(#9cbd7a,#8cb066 50%,#7fa559);border-bottom:1px solid #b4b8a8;border-top:1px solid #a9c68a;color:#f0f5e8"><span class="t" style="right:12px;top:2px">43</span></div>
<div class="a" style="left:709px;top:544px;width:681px;height:22px;background:linear-gradient(#9cbd7a,#8cb066 50%,#7fa559);border-bottom:1px solid #b4b8a8;border-top:1px solid #a9c68a;color:#f0f5e8"><span class="t" style="right:12px;top:2px">06</span></div>
<div class="a" style="left:709px;top:566px;width:681px;height:22px;background:linear-gradient(#9cbd7a,#8cb066 50%,#7fa559);border-bottom:1px solid #b4b8a8;border-top:1px solid #a9c68a;color:#f0f5e8"><span class="t" style="right:12px;top:2px">08</span></div>
<div class="a" style="left:709px;top:588px;width:681px;height:22px;background:linear-gradient(#9cbd7a,#8cb066 50%,#7fa559);border-bottom:1px solid #b4b8a8;border-top:1px solid #a9c68a;color:#f0f5e8"><span class="t" style="right:12px;top:2px">16</span></div>
<div class="a" style="left:709px;top:610px;width:681px;height:22px;background:linear-gradient(#9cbd7a,#8cb066 50%,#7fa559);border-bottom:1px solid #b4b8a8;border-top:1px solid #a9c68a;color:#f0f5e8"><span class="t" style="right:12px;top:2px">00</span></div>
<div class="a" style="left:709px;top:632px;width:681px;height:22px;background:linear-gradient(#9cbd7a,#8cb066 50%,#7fa559);border-bottom:1px solid #b4b8a8;border-top:1px solid #a9c68a;color:#f0f5e8"><span class="t" style="right:12px;top:2px">51</span></div>
<div class="a" style="left:709px;top:654px;width:681px;height:22px;background:linear-gradient(#9cbd7a,#8cb066 50%,#7fa559);border-bottom:1px solid #b4b8a8;border-top:1px solid #a9c68a;color:#f0f5e8"><span class="t" style="right:12px;top:2px">25</span></div>
<div class="a" style="left:709px;top:676px;width:681px;height:22px;background:linear-gradient(#9cbd7a,#8cb066 50%,#7fa559);border-bottom:1px solid #b4b8a8;border-top:1px solid #a9c68a;color:#f0f5e8"><span class="t" style="right:12px;top:2px">37</span></div>
<div class="a" style="left:709px;top:698px;width:681px;height:21px;background:linear-gradient(#9cbd7a,#8cb066 50%,#7fa559);border-bottom:1px solid #b4b8a8;border-top:1px solid #a9c68a;color:#f0f5e8"><span class="t" style="right:12px;top:2px">54</span></div>
<div class="a" style="left:1390px;top:411px;width:15px;height:312px;background:linear-gradient(90deg,#d2d2d2,#e6e6e6 45%)"></div>
<div class="sbt" style="left:1393px;top:629px;width:9px;height:89px"></div>
<div class="a" style="left:709px;top:720px;width:681px;height:14px;background:#ececec"></div>
<div class="pan" style="left:8px;top:769px;width:1393px;height:149px;background:#f7f7f7;overflow:hidden"></div>
<div class="hdr" style="left:9px;top:770px;width:1391px;height:23px"></div>
<div class="a" style="left:1377px;top:770px;width:1px;height:23px;background:#b9b9b9"></div>
<div class="a" style="left:1367px;top:774px;width:8px;height:16px;overflow:hidden"><div class="t" style="right:0;top:0">Taille</div></div>
<div class="t" style="left:1383px;top:774px;width:17px;overflow:hidden">Priorité</div>
<div class="a" style="left:8px;top:919px;width:1394px;height:14px;background:linear-gradient(#d0d0d0,#e0e0e0)"></div>
<div class="sbt" style="left:10px;top:921px;width:1183px;height:10px"></div>
<div class="a" style="left:4px;top:934px;width:1402px;height:2px;background:linear-gradient(#f4f4f4 50%,#6e6e6e 50%)"></div>
<div class="a" style="left:8px;top:935px;width:189px;height:31px;background:#ebebeb;border:1px solid #9c9c9c;border-top:none;border-radius:0 0 4px 4px;box-shadow:0 1px 0 #c4c4c4"></div>
<div class="t" style="left:13px;top:944px">Fichiers en file d'attente</div>
<div class="a" style="left:200px;top:937px;width:124px;height:24px;background:linear-gradient(#d2d2d2,#dadada);border:1px solid #a9a9a9;border-top:none;border-radius:0 0 4px 4px"></div>
<div class="t" style="left:204px;top:941px">Transferts échoués</div>
<div class="a" style="left:327px;top:937px;width:116px;height:24px;background:linear-gradient(#d2d2d2,#dadada);border:1px solid #a9a9a9;border-top:none;border-radius:0 0 4px 4px"></div>
<div class="t" style="left:331px;top:941px">Transferts réussis</div>
<svg class="a" style="left:1131px;top:970px" width="12" height="15" viewBox="0 0 12 15"><path d="M3 7V4.5Q3 1.5 6 1.5Q9 1.5 9 4.5V7" fill="none" stroke="#9a9a9a" stroke-width="1.6"/><rect x="1" y="7" width="10" height="7.5" rx="1" fill="#bfbfbf" stroke="#8a8a8a" stroke-width=".6"/><rect x="2" y="10.5" width="8" height="2" fill="#e8c020"/><path d="M3 10.5l1.5 2M6 10.5l1.5 2" stroke="#222" stroke-width="1"/></svg>
<div class="a" style="left:1151px;top:971px;width:12px;height:13px;background:#f2f2f2;border:1px dotted #999"></div>
<div class="a" style="left:1168px;top:974px;width:16px;height:7px;background:#1a1a1a;color:#fff;font:bold 6px/7px 'DejaVu Sans',sans-serif;letter-spacing:0;text-align:center;overflow:hidden">500</div>
<div class="t" style="left:1194px;top:970px">File d'attente : vide</div>
<div class="a" style="left:1362px;top:973px;width:8px;height:8px;border-radius:4px;background:radial-gradient(circle at 40% 35%,#3f7a3f,#143c14 70%)"></div>
<div class="a" style="left:1376px;top:973px;width:8px;height:8px;border-radius:4px;background:radial-gradient(circle at 40% 35%,#943838,#4d0e0e 70%)"></div>
</div>
<div class="win" style="left:103px;top:119px;width:1713px;height:815px;border-color:#8a8a8a;box-shadow:0 0 0 0 #000">
<div class="a" style="left:0;top:0;width:1713px;height:84px;background:linear-gradient(#fbfbfb 0,#fbfbfb 1px,#e6e6e6 1px,#dedede 20px,#d8d8d8 40%,#c2c2c2 100%)"></div>
<div class="a" style="left:0;top:84px;width:1713px;height:1px;background:#a0a0a0"></div><div class="a" style="left:0;top:85px;width:1713px;height:1px;background:#e2e2e2"></div>
<div class="a" style="left:1709px;top:1px;width:3px;height:84px;background:linear-gradient(#e2e2e2,#d6d6d6)"></div>
<svg class="a" style="left:10px;top:8px" width="10" height="7"><path d="M.6 0L9.2 0L4.9 5.8Z" fill="#9c9c9c"/></svg>
<div class="ttl" style="left:834px;top:3px;color:#646464;text-shadow:0 1px 0 #ececec">bk_up_pour_nxtcloud</div>
<svg class="a" style="left:1648px;top:7px" width="10" height="10"><path d="M1 6.5h8" stroke="#868686" stroke-width="1.8"/></svg><svg class="a" style="left:1669px;top:7px" width="10" height="10"><path d="M1 5h8M5 1v8" stroke="#868686" stroke-width="1.8"/></svg><svg class="a" style="left:1690px;top:7px" width="10" height="10"><path d="M1.5 1.5l7 7M8.5 1.5l-7 7" stroke="#868686" stroke-width="2"/></svg>
<div class="t" style="left:8px;top:23px;color:#222">Fichier</div><div class="t" style="left:59px;top:23px;color:#222">Édition</div><div class="t" style="left:113px;top:23px;color:#222">Affichage</div><div class="t" style="left:182px;top:23px;color:#222">Aller à</div><div class="t" style="left:231px;top:23px;color:#222">Signets</div><div class="t" style="left:288px;top:23px;color:#222">Aide</div>
<svg class="a" style="left:16px;top:56px" width="15" height="14" viewBox="0 0 15 14"><path d="M0.5 7 L7.5 .8 L7.5 4.2 L14 4.2 L14 9.8 L7.5 9.8 L7.5 13.2Z" fill="#2e2e2e"/></svg>
<div class="t" style="left:38px;top:55px">Précédent</div>
<svg class="a" style="left:112px;top:61px" width="9" height="6" viewBox="0 0 9 6"><path d="M0 0L9 0L4.5 5.5Z" fill="#1a1a1a"/></svg>
<svg class="a" style="left:138px;top:56px" width="15" height="14" viewBox="0 0 15 14"><path d="M14.5 7 L7.5 .8 L7.5 4.2 L1 4.2 L1 9.8 L7.5 9.8 L7.5 13.2Z" fill="#a9a9a9"/></svg>
<div class="t" style="left:161px;top:55px;color:#a2a2a2">Suivant</div>
<svg class="a" style="left:220px;top:61px" width="9" height="6" viewBox="0 0 9 6"><path d="M0 0L9 0L4.5 5.5Z" fill="#a9a9a9"/></svg>
<svg class="a" style="left:247px;top:55px" width="14" height="16" viewBox="0 0 14 16"><path d="M7 .8 L13.2 8 L9.8 8 L9.8 15 L4.2 15 L4.2 8 L.8 8Z" fill="#2e2e2e"/></svg>
<svg class="a" style="left:280px;top:55px" width="16" height="16" viewBox="0 0 16 16"><circle cx="8" cy="8" r="6.2" fill="none" stroke="#b4acac" stroke-width="2.7"/><path d="M3.6 3.6 L12.4 12.4" stroke="#b4acac" stroke-width="2.7"/></svg>
<svg class="a" style="left:314px;top:55px" width="16" height="16" viewBox="0 0 16 16"><path d="M4 5.2 A6 6 0 1 1 5.2 13" fill="none" stroke="#2e2e2e" stroke-width="2.3"/><path d="M.2 5.6 L7.4 2.8 L5.4 9.8Z" fill="#2e2e2e"/></svg>
<div class="sep" style="left:344px;top:52px;height:21px"></div>
<svg class="a" style="left:356px;top:52px" width="24" height="24" viewBox="0 0 24 24"><path d="M1.5 6 L1.5 2.5 L11 2.5 L12.5 4.5 L22.5 4.5 L22.5 8 L1.5 8Z" fill="#f6f6f6" stroke="#c0c0c0" stroke-width=".7"/><rect x=".8" y="6.5" width="22.4" height="15" rx="1" fill="url(#gG)" stroke="#5f843a" stroke-width=".7"/><path d="M12 8.6 L19 14.6 L17 14.6 L17 19.6 L13.6 19.6 L13.6 16.2 L10.4 16.2 L10.4 19.6 L7 19.6 L7 14.6 L5 14.6Z" fill="#4f7a30"/></svg>
<svg class="a" style="left:391px;top:53px" width="22" height="21" viewBox="0 0 22 21"><rect x=".5" y=".5" width="21" height="14.5" rx="1" fill="#1a1a1a" stroke="#3a3a3a"/><path d="M1 1 L21 1 L21 6 Q11 9 1 12Z" fill="#3c3c3c"/><path d="M8.5 15 L13.5 15 L14.5 18 L7.5 18Z" fill="#c4c4c4"/><ellipse cx="11" cy="18.8" rx="5.8" ry="1.5" fill="#e4e4e4" stroke="#9a9a9a" stroke-width=".6"/></svg>
<div class="sep" style="left:424px;top:52px;height:21px"></div>
<svg class="a" style="left:436px;top:55px" width="16" height="16" viewBox="0 0 16 16"><circle cx="6" cy="6" r="4.6" fill="none" stroke="#2e2e2e" stroke-width="1.5"/><path d="M9.4 9.4 L14.6 14.6" stroke="#2e2e2e" stroke-width="1.8"/><path d="M3.6 6h4.8" stroke="#2e2e2e" stroke-width="1.6"/></svg>
<div class="t" style="left:462px;top:55px">150%</div>
<svg class="a" style="left:507px;top:55px" width="16" height="16" viewBox="0 0 16 16"><circle cx="6" cy="6" r="4.6" fill="none" stroke="#2e2e2e" stroke-width="1.5"/><path d="M9.4 9.4 L14.6 14.6" stroke="#2e2e2e" stroke-width="1.8"/><path d="M3.6 6h4.8M6 3.6v4.8" stroke="#2e2e2e" stroke-width="1.6"/></svg>
<div class="a" style="left:529px;top:50px;width:116px;height:25px;border:1px solid #a0a0a0;border-radius:4px;background:linear-gradient(#f4f4f4,#dedede);box-shadow:0 1px 0 #d9d9d9"></div>
<div class="t" style="left:534px;top:55px">Vue en icônes</div>
<svg class="a" style="left:630px;top:61px" width="9" height="6" viewBox="0 0 9 6"><path d="M0 0L9 0L4.5 5.5Z" fill="#1a1a1a"/></svg>
<svg class="a" style="left:654px;top:53px" width="19" height="19" viewBox="0 0 19 19"><circle cx="7.5" cy="7.5" r="5.4" fill="none" stroke="#2a2a2a" stroke-width="2.2"/><path d="M11.6 11.6 L17 17" stroke="#2a2a2a" stroke-width="2.8" stroke-linecap="round"/></svg>
<div class="t" style="left:11px;top:95px">Raccourcis</div>
<svg class="a" style="left:337px;top:100px" width="9" height="6" viewBox="0 0 9 6"><path d="M0 0L9 0L4.5 5.5Z" fill="#1a1a1a"/></svg>
<svg class="a" style="left:362px;top:98px" width="10" height="10" viewBox="0 0 10 10"><path d="M1.5 1.5L8.5 8.5M8.5 1.5L1.5 8.5" stroke="#2a2a2a" stroke-width="2.6"/></svg>
<div class="tgl" style="left:393px;top:90px;width:24px;height:26px;background:#bdbdbd"></div>
<svg class="a" style="left:397px;top:94px" width="16" height="18" viewBox="0 0 16 18"><path d="M3.5 2.5 L6.5 .8 L13 9.5 L10.2 11.4Z" fill="#222"/><path d="M10.2 11.4 L13 9.5 L13.6 12.8Z" fill="#fff" stroke="#222" stroke-width=".5"/><path d="M1.5 15.5h7" stroke="#222" stroke-width="1.2" stroke-dasharray="1.4 1.2"/></svg>
<div class="t" style="left:438px;top:95px">Emplacement :</div>
<div class="inp" style="left:539px;top:92px;width:1165px;height:22px;background:#f6f6f6"></div>
<div class="t" style="left:543px;top:95px">/media/lep0le/ESPACE__####/bk_up_pour_nxtcloud</div>
<svg class="a" style="left:1684px;top:97px" width="16" height="12" viewBox="0 0 16 12"><path d="M.5 6 L5.5 .5 L15 .5 Q15.5 .5 15.5 1 L15.5 11 Q15.5 11.5 15 11.5 L5.5 11.5Z" fill="#2a2a2a"/><path d="M7.6 3.4 L12.4 8.6 M12.4 3.4 L7.6 8.6" stroke="#f4f4f4" stroke-width="1.7"/></svg>
<div class="a" style="left:2px;top:121px;width:382px;height:691px;background:#4f4f4f;color:#fff;border:1px solid #3f3f3f;border-width:1px 0 0 0">
<div class="t" style="left:17px;top:3px;font-weight:bold">Poste de travail</div>
<svg class="a" style="left:25px;top:25px" width="16" height="16" viewBox="0 0 16 16"><use href="#sf" width="16" height="16"/><path d="M8 6.6 L12 10 L11 10 L11 13 L9 13 L9 11 L7 11 L7 13 L5 13 L5 10 L4 10Z" fill="#4f7a30"/></svg>
<div class="t" style="left:45px;top:25px">lep0le</div>
<svg class="a" style="left:25px;top:47px" width="16" height="16" viewBox="0 0 16 16"><rect x="1" y="2.5" width="14" height="11" fill="url(#gG)" stroke="#5f843a" stroke-width=".7"/><rect x="1" y="2.5" width="14" height="2.3" fill="#e9efe2"/><rect x="3" y="10.5" width="10" height="3" fill="#3a3a3a"/></svg>
<div class="t" style="left:45px;top:47px">Bureau</div>
<svg class="a" style="left:25px;top:69px" width="16" height="16" viewBox="0 0 16 16"><use href="#hd" width="16" height="16"/></svg>
<div class="t" style="left:45px;top:69px">Système de fichiers</div>
<svg class="a" style="left:25px;top:91px" width="16" height="16" viewBox="0 0 16 16"><use href="#sf" width="16" height="16"/><path d="M8 6.5 L13 6.5 L14.5 8 L14.5 15 L8 15Z" fill="#f3f3f3" stroke="#9a9a9a" stroke-width=".5"/></svg>
<div class="t" style="left:45px;top:91px">Documents</div>
<svg class="a" style="left:25px;top:113px" width="16" height="16" viewBox="0 0 16 16"><use href="#sf" width="16" height="16"/><path d="M8.5 7 L11.5 7 L11.5 11 L13.5 11 L10 15 L6.5 11 L8.5 11Z" fill="#f3f3f3" stroke="#8a8a8a" stroke-width=".5"/></svg>
<div class="t" style="left:45px;top:113px">Téléchargements</div>
<svg class="a" style="left:25px;top:135px" width="16" height="16" viewBox="0 0 16 16"><use href="#sf" width="16" height="16"/><path d="M10 8 L14 7 L14 13 M10 8 L10 14" stroke="#333" stroke-width="1" fill="none"/><ellipse cx="9" cy="14" rx="1.4" ry="1" fill="#333"/><ellipse cx="13" cy="13" rx="1.4" ry="1" fill="#333"/></svg>
<div class="t" style="left:45px;top:135px">Musique</div>
<svg class="a" style="left:25px;top:157px" width="16" height="16" viewBox="0 0 16 16"><use href="#sf" width="16" height="16"/><rect x="5" y="7.5" width="10" height="7.5" rx="1" fill="#dcdcdc" stroke="#555" stroke-width=".7"/><rect x="7" y="9" width="6" height="4.5" fill="#3c4a3c"/><circle cx="3" cy="9" r="1.8" fill="#e6e6e6" stroke="#777" stroke-width=".5"/></svg>
<div class="t" style="left:45px;top:157px">Images</div>
<svg class="a" style="left:25px;top:179px" width="16" height="16" viewBox="0 0 16 16"><use href="#sf" width="16" height="16"/><rect x="8" y="6.5" width="6.5" height="8.5" fill="#4a6a8a" stroke="#333" stroke-width=".5"/><path d="M9 8h4.5M9 10.3h4.5M9 12.6h4.5" stroke="#9fc4e6" stroke-width="1.1"/></svg>
<div class="t" style="left:45px;top:179px">Vidéos</div>
<svg class="a" style="left:25px;top:201px" width="16" height="16" viewBox="0 0 16 16"><path d="M4.5 3 L11.5 3 L12 5 L11 15 L5 15 L4 5Z" fill="#cfd2cf" stroke="#8a8a8a" stroke-width=".7"/><ellipse cx="8" cy="3.6" rx="3.8" ry="1.6" fill="#e8e8e8" stroke="#8a8a8a" stroke-width=".6"/><path d="M7 6 L7 13" stroke="#6f9946" stroke-width="1.6"/></svg>
<div class="t" style="left:45px;top:201px">Corbeille</div>
<div class="t" style="left:17px;top:223px;font-weight:bold">Appareils</div>
<svg class="a" style="left:25px;top:245px" width="16" height="16" viewBox="0 0 16 16"><use href="#hd" width="16" height="16"/></svg>
<div class="t" style="left:45px;top:245px">All_data</div>
<svg class="a" style="left:359px;top:247px" width="12" height="12" viewBox="0 0 12 12"><use href="#ej" width="12" height="12"/></svg>
<svg class="a" style="left:25px;top:267px" width="16" height="16" viewBox="0 0 16 16"><use href="#hd" width="16" height="16"/></svg>
<div class="t" style="left:45px;top:267px">Volume de 54 GB</div>
<svg class="a" style="left:25px;top:289px" width="16" height="16" viewBox="0 0 16 16"><use href="#hd" width="16" height="16"/></svg>
<div class="t" style="left:45px;top:289px">Volume de 30 GB</div>
<svg class="a" style="left:25px;top:311px" width="16" height="16" viewBox="0 0 16 16"><use href="#usb" width="16" height="16"/></svg>
<div class="t" style="left:45px;top:311px">all_data_bkup</div>
<svg class="a" style="left:359px;top:313px" width="12" height="12" viewBox="0 0 12 12"><use href="#ej" width="12" height="12"/></svg>
<svg class="a" style="left:25px;top:333px" width="16" height="16" viewBox="0 0 16 16"><use href="#usb" width="16" height="16"/></svg>
<div class="t" style="left:45px;top:333px">Volume de 159 GB</div>
<svg class="a" style="left:359px;top:335px" width="12" height="12" viewBox="0 0 12 12"><use href="#ej" width="12" height="12"/></svg>
<svg class="a" style="left:25px;top:355px" width="16" height="16" viewBox="0 0 16 16"><use href="#usb" width="16" height="16"/></svg>
<div class="t" style="left:45px;top:355px">ESPACE__####</div>
<svg class="a" style="left:359px;top:357px" width="12" height="12" viewBox="0 0 12 12"><use href="#ej" width="12" height="12"/></svg>
<svg class="a" style="left:25px;top:377px" width="16" height="16" viewBox="0 0 16 16"><use href="#usb" width="16" height="16"/></svg>
<div class="t" style="left:45px;top:377px">VISU#####</div>
<svg class="a" style="left:359px;top:379px" width="12" height="12" viewBox="0 0 12 12"><use href="#ej" width="12" height="12"/></svg>
<div class="t" style="left:17px;top:399px;font-weight:bold">Signets</div>
<svg class="a" style="left:25px;top:421px" width="16" height="16" viewBox="0 0 16 16"><use href="#sf" width="16" height="16"/></svg>
<div class="t" style="left:45px;top:421px">Nextcloud</div>
<svg class="a" style="left:25px;top:443px" width="16" height="16" viewBox="0 0 16 16"><use href="#sf" width="16" height="16"/></svg>
<div class="t" style="left:45px;top:443px">dwhelper</div>
<svg class="a" style="left:25px;top:465px" width="16" height="16" viewBox="0 0 16 16"><use href="#sf" width="16" height="16"/><rect x="5" y="7.5" width="6.5" height="5.5" fill="#f0f0f0" stroke="#444" stroke-width=".7"/><rect x="7" y="9.3" width="2.5" height="2.5" fill="#333"/></svg>
<div class="t" style="left:45px;top:465px">10_TERABytes</div>
<svg class="a" style="left:25px;top:487px" width="16" height="16" viewBox="0 0 16 16"><use href="#sf" width="16" height="16"/><rect x="5" y="7.5" width="6.5" height="5.5" fill="#f0f0f0" stroke="#444" stroke-width=".7"/><rect x="7" y="9.3" width="2.5" height="2.5" fill="#333"/></svg>
<div class="t" style="left:45px;top:487px">3T_Bk_Up</div>
<svg class="a" style="left:25px;top:509px" width="16" height="16" viewBox="0 0 16 16"><use href="#sf" width="16" height="16"/><rect x="5" y="7.5" width="6.5" height="5.5" fill="#f0f0f0" stroke="#444" stroke-width=".7"/><rect x="7" y="9.3" width="2.5" height="2.5" fill="#333"/></svg>
<div class="t" style="left:45px;top:509px">Caly</div>
<svg class="a" style="left:25px;top:531px" width="16" height="16" viewBox="0 0 16 16"><use href="#sf" width="16" height="16"/><rect x="5" y="7.5" width="6.5" height="5.5" fill="#f0f0f0" stroke="#444" stroke-width=".7"/><rect x="7" y="9.3" width="2.5" height="2.5" fill="#333"/></svg>
<div class="t" style="left:45px;top:531px">DOC_server</div>
<svg class="a" style="left:25px;top:553px" width="16" height="16" viewBox="0 0 16 16"><use href="#sf" width="16" height="16"/><rect x="5" y="7.5" width="6.5" height="5.5" fill="#f0f0f0" stroke="#444" stroke-width=".7"/><rect x="7" y="9.3" width="2.5" height="2.5" fill="#333"/></svg>
<div class="t" style="left:45px;top:553px">Sensible</div>
<div class="t" style="left:17px;top:575px;font-weight:bold">Réseau</div>
<svg class="a" style="left:25px;top:597px" width="16" height="16" viewBox="0 0 16 16"><use href="#sf" width="16" height="16"/><rect x="5" y="7.5" width="6.5" height="5.5" fill="#f0f0f0" stroke="#444" stroke-width=".7"/><rect x="7" y="9.3" width="2.5" height="2.5" fill="#333"/></svg>
<div class="t" style="left:45px;top:597px">Parcourir le réseau</div>
</div>
<div class="a" style="left:385px;top:436px;width:2px;height:25px;background:repeating-linear-gradient(#9c9c9c 0,#9c9c9c 2px,transparent 2px,transparent 5.5px)"></div>
<div class="a" style="left:388px;top:121px;width:1321px;height:669px;background:#f7f7f7;border:1px solid #a3a3a3">
<svg class="a" style="left:22px;top:22px" width="70" height="60" viewBox="0 0 70 60"><use href="#fold" width="70" height="60"/></svg>
<div class="fi" style="left:58px;top:84px">obj_banque<i>51 éléments</i></div>
<svg class="a" style="left:120px;top:22px" width="70" height="60" viewBox="0 0 70 60"><use href="#fold" width="70" height="60"/></svg>
<div class="fi" style="left:157px;top:84px">british_poll<i>8 éléments</i></div>
<svg class="a" style="left:233px;top:22px" width="70" height="60" viewBox="0 0 70 60"><use href="#fold" width="70" height="60"/></svg>
<div class="fi" style="left:269px;top:84px">databit.me_2018<i>80 éléments</i></div>
<svg class="a" style="left:353px;top:22px" width="70" height="60" viewBox="0 0 70 60"><use href="#fold" width="70" height="60"/></svg>
<div class="fi" style="left:390px;top:84px">demo_atelier_<br>cinema_Arles<i>6 éléments</i></div>
<svg class="a" style="left:475px;top:22px" width="70" height="60" viewBox="0 0 70 60"><use href="#fold" width="70" height="60"/></svg>
<div class="fi" style="left:511px;top:84px">export_video-CPIE<i>4 éléments</i></div>
<svg class="a" style="left:610px;top:22px" width="70" height="60" viewBox="0 0 70 60"><use href="#fold" width="70" height="60"/></svg>
<div class="fi" style="left:646px;top:84px">CPIE_bEAUCHAMP<i>8 éléments</i></div>
<svg class="a" style="left:741px;top:22px" width="70" height="60" viewBox="0 0 70 60"><use href="#foldB" width="70" height="60"/></svg>
<div class="fi" style="left:778px;top:84px">EVERnotes_<br>gambetta_riche_<br>lieu<i>1 élément</i></div>
<svg class="a" style="left:872px;top:22px" width="70" height="60" viewBox="0 0 70 60"><use href="#foldB" width="70" height="60"/></svg>
<div class="fi" style="left:909px;top:84px">danse_gambetta_<br>videotchat_tof_<br>supp<i>20 éléments</i></div>
<svg class="a" style="left:1005px;top:22px" width="70" height="60" viewBox="0 0 70 60"><use href="#foldB" width="70" height="60"/></svg>
<div class="fi" style="left:1042px;top:84px">danse_gambetta_<br>MINIMAL<i>3 éléments</i></div>
<svg class="a" style="left:1119px;top:22px" width="70" height="60" viewBox="0 0 70 60"><use href="#fold" width="70" height="60"/></svg>
<div class="fi" style="left:1156px;top:84px">deal<i>6 éléments</i></div>
<svg class="a" style="left:1222px;top:22px" width="70" height="60" viewBox="0 0 70 60"><use href="#fold" width="70" height="60"/></svg>
<div class="fi" style="left:1258px;top:84px">atelier_street_<br>photo_P0llux<i>131 éléments</i></div>
<svg class="a" style="left:35px;top:166px" width="70" height="60" viewBox="0 0 70 60"><use href="#fold" width="70" height="60"/></svg>
<div class="fi" style="left:72px;top:228px">databit_18_Expo<i>1 élément</i></div>
<svg class="a" style="left:147px;top:166px" width="70" height="60" viewBox="0 0 70 60"><use href="#fold" width="70" height="60"/></svg>
<div class="fi" style="left:183px;top:228px">itep_gresan<i>5 éléments</i></div>
<svg class="a" style="left:247px;top:166px" width="70" height="60" viewBox="0 0 70 60"><use href="#fold" width="70" height="60"/></svg>
<div class="fi" style="left:284px;top:228px">bk-up_jvc<i>31 éléments</i></div>
<svg class="a" style="left:361px;top:166px" width="70" height="60" viewBox="0 0 70 60"><use href="#fold" width="70" height="60"/></svg>
<div class="fi" style="left:398px;top:228px">street_photo_St-<br>Gilles<i>16 éléments</i></div>
<svg class="a" style="left:497px;top:166px" width="70" height="60" viewBox="0 0 70 60"><use href="#fold" width="70" height="60"/></svg>
<div class="fi" style="left:533px;top:228px">street-photo-P0llux-<br>2<i>269 éléments</i></div>
<svg class="a" style="left:638px;top:166px" width="70" height="60" viewBox="0 0 70 60"><use href="#fold" width="70" height="60"/></svg>
<div class="fi" style="left:674px;top:228px">selection-expo-18-<br>12-2019<i>89 éléments</i></div>
<svg class="a" style="left:751px;top:166px" width="70" height="60" viewBox="0 0 70 60"><use href="#fold" width="70" height="60"/></svg>
<div class="fi" style="left:789px;top:228px">LTC.tv<i>1 élément</i></div>
<svg class="a" style="left:860px;top:166px" width="70" height="60" viewBox="0 0 70 60"><use href="#foldR" width="70" height="60"/></svg>
<div class="fi" style="left:897px;top:228px">marathon_2019<i>18 éléments</i></div>
<div class="a" style="left:452px;top:86px;width:1px;height:26px;background:#8db35f"></div>
<div class="a" style="left:587px;top:86px;width:1px;height:26px;background:#8db35f"></div>
<div class="a" style="left:1211px;top:86px;width:1px;height:40px;background:#8db35f"></div>
</div>
<div class="t" style="left:392px;top:793px">19 éléments, espace libre : 9,6 Gio</div>
</div>
<svg class="a" style="left:1702px;top:601px" width="14" height="21" viewBox="0 0 14 21"><path d="M1 1 L1 16.5 L4.8 13 L7.6 19.6 L10 18.6 L7.2 12.2 L12.2 12.2Z" fill="#fff" stroke="#000" stroke-width="1.1" stroke-linejoin="round"/></svg>
<div class="a" style="left:0;top:1055px;width:1920px;height:25px;background:linear-gradient(#e6e6e6 0,#dadada 2px,#d2d2d2 100%);border-top:1px solid #f2f2f2"></div>
<svg class="a" style="left:8px;top:1059px" width="18" height="18" viewBox="0 0 18 18"><g stroke="#3c3c3c" stroke-width="2.6"><path d="M9 .6v16.8M.6 9h16.8M3.1 3.1l11.8 11.8M14.9 3.1L3.1 14.9"/></g><circle cx="9" cy="9" r="6.2" fill="#3c3c3c"/><circle cx="9" cy="9" r="4" fill="#dedede"/></svg>
<div class="t" style="left:33px;top:1061px;color:#222">Menu</div>
<div class="a" style="left:75px;top:1057px;width:23px;height:22px;border:1px solid #b0b0b0;border-radius:4px;background:linear-gradient(#f2f2f2,#dcdcdc)"></div>
<svg class="a" style="left:79px;top:1061px" width="15" height="14" viewBox="0 0 15 14"><rect x=".5" y=".5" width="14" height="13" fill="url(#gG)" stroke="#4f6f30"/><rect x="1" y="1" width="13" height="3" fill="#e4ecd9"/><rect x="3" y="9" width="9" height="3.5" fill="#333"/></svg>
<svg class="a" style="left:99px;top:1057px" width="22" height="22" viewBox="0 0 22 22"><circle cx="12" cy="10" r="8.4" fill="#3a78c8"/><path d="M8 4 Q11 2.6 14 3.6 Q12.5 5 13.5 6.5 Q16 6 17 8 Q15 8.6 14.6 10 Q12 10 11 8.6 Q9 9 8 7.4 Q9 6 8 4Z" fill="#7ab4ec"/><path d="M4.2 1.6 Q3.4 4.4 4.6 6.4 Q3 9 3.6 12 Q2 10.6 1.8 8 Q.2 12.6 2.6 16.4 Q5.6 21 11.4 21 Q17.6 20.8 20.4 15.6 Q22.4 11 20.6 6.6 Q20.4 9 19.4 10 Q19.6 13.4 17 15.6 Q13.6 18 10 16.4 Q7.4 15 7.2 12.4 Q8.6 13.4 10.4 12.8 Q11.6 11.6 10.6 10.6 Q8.4 10.8 7.4 9 Q7 7 8.4 5.4 Q6 5.4 4.8 6.6 Q4 4 4.2 1.6Z" fill="#ee7c14"/><path d="M4.2 1.6 Q3.4 4.4 4.6 6.4 Q3 9 3.6 12 Q4.4 8.6 7.4 9 Q7 7 8.4 5.4 Q6 5.4 4.8 6.6 Q4 4 4.2 1.6Z" fill="#f8b82a"/><path d="M2.6 16.4 Q5.6 21 11.4 21 Q17.6 20.8 20.4 15.6 Q16 19.6 10.6 18.6 Q5.6 18 2.6 16.4Z" fill="#d8500e"/></svg>
<svg class="a" style="left:124px;top:1057px" width="22" height="22" viewBox="0 0 22 22"><path d="M3 5 Q3 2 7 2 L13 2 Q17 2 17 6 L17 14 Q17 19 12 19 L7 19 Q2 19 2 14Z" fill="#f4f4f4" stroke="#555" stroke-width="1"/><circle cx="7" cy="8" r="1.3" fill="#333"/><circle cx="12.5" cy="8" r="1.3" fill="#333"/><path d="M4 12 L7 14 L10 12 L13 14 L16 12 L16 15 L4 15Z" fill="#fff" stroke="#555" stroke-width=".8"/><path d="M18.5 8 Q20.5 11 18.5 15 M20.5 6 Q23 11 20.5 17" stroke="#4a86dc" stroke-width="1.1" fill="none"/></svg>
<svg class="a" style="left:147px;top:1057px" width="22" height="22" viewBox="0 0 22 22"><rect x="0" y="1" width="22" height="20" rx="2" fill="#f0c4a6"/><path d="M2 13 Q10 3 21 10 Q12 9 2 13Z" fill="#1a1a1a"/><ellipse cx="11.5" cy="13" rx="6.5" ry="3.6" fill="#f4f4f4"/><circle cx="11.5" cy="13" r="3.2" fill="#3f86c8"/><circle cx="11.5" cy="13" r="1.4" fill="#111"/></svg>
<svg class="a" style="left:171px;top:1057px" width="22" height="22" viewBox="0 0 22 22"><rect x="0" y="1" width="22" height="20" rx="2" fill="#9cbd4c"/><circle cx="11" cy="11" r="7.5" fill="none" stroke="#c9de8c" stroke-width="1.6"/><circle cx="11" cy="11" r="4.2" fill="none" stroke="#c9de8c" stroke-width="1.5"/><circle cx="11" cy="11" r="1.4" fill="#c9de8c"/></svg>
<svg class="a" style="left:226px;top:1057px" width="22" height="22" viewBox="0 0 22 22"><path d="M3 2 L19 2 L21 15 L21 20 L1 20 L1 15Z" fill="#e9e9e9" stroke="#a9a9a9" stroke-width=".8"/><path d="M1 15 L21 15 L21 20 L1 20Z" fill="#cfcfcf"/><path d="M7 7h8M7 9.5h8" stroke="#c4c4c4" stroke-width="1"/><circle cx="17" cy="17.5" r=".9" fill="#6fae3f"/></svg>
<svg class="a" style="left:251px;top:1057px" width="22" height="22" viewBox="0 0 22 22"><rect x="0" y="1" width="22" height="20" rx="2" fill="#222"/><path d="M0 1 L22 1 L22 5 L0 5Z" fill="#111"/><path d="M2 1l3 4M7 1l3 4M12 1l3 4M17 1l3 4" stroke="#eee" stroke-width="1.6"/><path d="M9 8 L17 6.5 L17 15 M9 8 L9 17" stroke="#7fc241" stroke-width="2" fill="none"/><ellipse cx="7" cy="17" rx="2.8" ry="2.1" fill="#7fc241"/><ellipse cx="15" cy="15.4" rx="2.8" ry="2.1" fill="#7fc241"/></svg>
<svg class="a" style="left:275px;top:1057px" width="22" height="22" viewBox="0 0 22 22"><rect x="0" y="1" width="22" height="20" rx="3" fill="#e02a8a"/><path d="M11 11 L0 1 L11 1Z" fill="#8a2ad8"/><path d="M11 11 L11 1 L22 1Z" fill="#e02a4a"/><path d="M11 11 L22 1 L22 11Z" fill="#f08a1c"/><path d="M11 11 L22 11 L22 21Z" fill="#f0d820"/><path d="M11 11 L22 21 L11 21Z" fill="#5ac83a"/><path d="M11 11 L11 21 L0 21Z" fill="#2ab8a8"/><path d="M11 11 L0 21 L0 11Z" fill="#2a6ad8"/><path d="M11 11 L0 11 L0 1Z" fill="#5a3ad8"/></svg>
<svg class="a" style="left:299px;top:1057px" width="22" height="22" viewBox="0 0 22 22"><path d="M11 1 L20 6 L20 16 L11 21 L2 16 L2 6Z" fill="#fff" stroke="#111" stroke-width="1"/><path d="M11 11 L11 2.5 M11 11 L3.5 15.2 M11 11 L18.5 15.2" stroke="#111" stroke-width="2.6"/><path d="M11 1 L14 6 L8 6Z M2 16 L3 10.5 L7 14.5Z M20 16 L15 14.5 L19 10.5Z" fill="#111"/></svg>
<svg class="a" style="left:323px;top:1057px" width="22" height="22" viewBox="0 0 22 22"><path d="M1 14 L16 1 L21 7 L6 21Z" fill="#3a5a9a"/><path d="M3 14.5 L16.5 3 L19 6 L5.5 18Z" fill="#6a8ad0"/><path d="M7 9 L13 15" stroke="#c84a3a" stroke-width="3" opacity=".6"/></svg>
<svg class="a" style="left:346px;top:1057px" width="22" height="22" viewBox="0 0 22 22"><rect x="0" y="1" width="22" height="20" rx="3" fill="#6a2a9a"/><rect x="12" y="1" width="10" height="20" rx="3" fill="#9a2a6a" opacity=".7"/><path d="M4.5 14 L4.5 10 Q4.5 4.5 11 4.5 Q17.5 4.5 17.5 10 L17.5 14" fill="none" stroke="#fff" stroke-width="1.8"/><rect x="3.4" y="11.5" width="3.6" height="6.5" rx="1.2" fill="#fff"/><rect x="15" y="11.5" width="3.6" height="6.5" rx="1.2" fill="#fff"/></svg>
<svg class="a" style="left:371px;top:1057px" width="22" height="22" viewBox="0 0 22 22"><path d="M3 1 L8 3 L14 12 L11 14 L5 6Z" fill="#d8b820" stroke="#6a5a10" stroke-width=".7"/><path d="M11 14 L14 12 L20 21 L18 22Z" fill="#222"/></svg>
<svg class="a" style="left:395px;top:1057px" width="22" height="22" viewBox="0 0 22 22"><rect x="0" y="1" width="22" height="20" rx="2" fill="#a8dca8"/><path d="M11 3 L14.5 5 L14.5 9 L11 11 L7.5 9 L7.5 5Z M6.5 10.5 L10 12.5 L10 16.5 L6.5 18.5 L3 16.5 L3 12.5Z M15.5 10.5 L19 12.5 L19 16.5 L15.5 18.5 L12 16.5 L12 12.5Z" fill="#3fae3f"/></svg>
<svg class="a" style="left:418px;top:1057px" width="22" height="22" viewBox="0 0 22 22"><rect x="1" y="4" width="20" height="14" fill="#d4d4d4" stroke="#8a8a8a" stroke-width=".8"/><rect x="8" y="2" width="6" height="9" fill="#555"/><rect x="9.6" y="3.5" width="2.8" height="3" fill="#e03030"/><path d="M3 14h16" stroke="#666" stroke-width="1.4" stroke-dasharray="1.2 1"/><path d="M0 9h4M18 9h4" stroke="#555" stroke-width="1.2"/></svg>
<svg class="a" style="left:442px;top:1057px" width="22" height="22" viewBox="0 0 22 22"><rect x="1.5" y="1" width="19" height="20" rx="1.5" fill="#d9d9d4" stroke="#8a8a80" stroke-width=".8"/><rect x="3.5" y="3" width="15" height="4" fill="#a9c48a"/><g fill="#3a3a3a"><rect x="3.5" y="9" width="3" height="2.4"/><rect x="7.6" y="9" width="3" height="2.4"/><rect x="11.6" y="9" width="3" height="2.4"/><rect x="15.6" y="9" width="3" height="2.4"/><rect x="3.5" y="12.6" width="3" height="2.4"/><rect x="7.6" y="12.6" width="3" height="2.4"/><rect x="11.6" y="12.6" width="3" height="2.4"/><rect x="15.6" y="12.6" width="3" height="2.4"/><rect x="3.5" y="16.2" width="3" height="2.4"/><rect x="7.6" y="16.2" width="3" height="2.4"/><rect x="11.6" y="16.2" width="3" height="2.4"/><rect x="15.6" y="16.2" width="3" height="2.4"/></g></svg>
<svg class="a" style="left:466px;top:1057px" width="22" height="22" viewBox="0 0 22 22"><rect x="1" y="1.5" width="20" height="19" rx="2" fill="#3a3a3a" stroke="#888" stroke-width=".8"/><path d="M15.5 6.5 Q11 4 7.5 6 Q5.5 8.5 9 10.5 L13 12 Q15.5 13.6 13.5 15.4 Q10 17.4 6 15" fill="none" stroke="#f0922a" stroke-width="2.6"/></svg>
<svg class="a" style="left:491px;top:1057px" width="22" height="22" viewBox="0 0 22 22"><rect x="2.5" y="2" width="15" height="19" rx="1" fill="#f8f8f8" stroke="#9a9a9a" stroke-width=".8"/><path d="M4 1v3M7 1v3M10 1v3M13 1v3M16 1v3" stroke="#777" stroke-width="1"/><path d="M5 8h10M5 11h10M5 14h10M5 17h10" stroke="#a4c0e0" stroke-width=".9"/><path d="M16.5 2 L19.5 3.5 L11.5 19 L9 20.5 L9 17.5Z" fill="#f0a020" stroke="#a05a10" stroke-width=".6"/><path d="M16.5 2 L19.5 3.5 L18.5 5.4 L15.5 3.9Z" fill="#e04a3a"/></svg>
<svg class="a" style="left:519px;top:1057px" width="24" height="22" viewBox="0 0 24 22"><path d="M1 6 L11 2 L21 6 L21 18 L11 21.5 L1 18Z" fill="#c49a6a" stroke="#8a6a44" stroke-width=".7"/><path d="M1 6 L11 9.5 L21 6 M11 9.5 L11 21.5" stroke="#8a6a44" stroke-width=".7" fill="none"/><path d="M9 3 L13 3 L13 9 L9 9Z" fill="#e4cfa8"/><circle cx="15.5" cy="16" r="5.8" fill="#3fb83f" stroke="#fff" stroke-width=".8"/><path d="M14 12.6 L17 12.6 L17 15.6 L19 15.6 L15.5 19.6 L12 15.6 L14 15.6Z" fill="#fff"/></svg>
<svg class="a" style="left:544px;top:1057px" width="22" height="22" viewBox="0 0 22 22"><rect x="1" y="1" width="20" height="20" fill="#c4141a"/><rect x="1" y="1" width="20" height="20" fill="none" stroke="#f0b0b0" stroke-width="1.5" stroke-dasharray="1.5 1.5"/><path d="M5 17 L7 5 L14 5 L13.6 7.4 L9.2 7.4 L8.8 10 L12.4 10 L12 12.2 L8.4 12.2 L7.6 17Z" fill="#fff"/><path d="M11.4 10.5 L18 10.5 L17.7 12.3 L14 15.2 L17 15.2 L16.7 17 L10 17 L10.3 15.2 L14 12.3 L11.1 12.3Z" fill="#fff"/></svg>
<svg class="a" style="left:569px;top:1057px" width="22" height="22" viewBox="0 0 22 22"><rect x="1" y="1.5" width="20" height="19" rx="1.5" fill="#c9c9c9" stroke="#777" stroke-width=".9"/><rect x="4" y="4.5" width="14" height="10" fill="#e9e9ee" stroke="#666" stroke-width=".9"/><rect x="8" y="7" width="6" height="4" fill="#7a9ad0"/><path d="M6 17.5h10" stroke="#555" stroke-width="2"/></svg>
<svg class="a" style="left:593px;top:1057px" width="22" height="22" viewBox="0 0 22 22"><rect x="1" y="1.5" width="20" height="19" rx="1.5" fill="#1a1a24" stroke="#8a8a8a" stroke-width="1"/><path d="M5 8 L9 11 L5 14" stroke="#fff" stroke-width="1.5" fill="none"/><path d="M10.5 14.5h5" stroke="#fff" stroke-width="1.5"/></svg>
<svg class="a" style="left:616px;top:1057px" width="22" height="22" viewBox="0 0 22 22"><defs><radialGradient id="ball" cx=".35" cy=".35" r=".7"><stop offset="0" stop-color="#f4f4f4"/><stop offset=".6" stop-color="#9a9a9a"/><stop offset="1" stop-color="#3a3a3a"/></radialGradient></defs><circle cx="11" cy="11" r="10" fill="url(#ball)" stroke="#b8a0c8" stroke-width=".8"/><path d="M1 11h20M11 1v20" stroke="#d8e05a" stroke-width="1" opacity=".9"/></svg>
<svg class="a" style="left:639px;top:1057px" width="24" height="22" viewBox="0 0 24 22"><circle cx="10" cy="11.5" r="8.6" fill="#f2f2f2" stroke="#7a7a7a" stroke-width="2"/><path d="M10 6v6l3.5 2" stroke="#555" stroke-width="1.3" fill="none"/><path d="M7 6.5 L12 11.5 L20.5 1.5" stroke="#2fae3a" stroke-width="2.8" fill="none"/><path d="M15 18 L19.5 22" stroke="#666" stroke-width="2.2"/></svg>
<svg class="a" style="left:665px;top:1057px" width="22" height="22" viewBox="0 0 22 22"><defs><radialGradient id="sph" cx=".4" cy=".35" r=".7"><stop offset="0" stop-color="#5a8a4a"/><stop offset=".35" stop-color="#1a2a1a"/><stop offset="1" stop-color="#0a0a0a"/></radialGradient></defs><rect x="0" y="1" width="22" height="20" rx="2" fill="#b4b4b4"/><circle cx="11" cy="11" r="9.4" fill="url(#sph)" stroke="#444" stroke-width=".8"/><path d="M5 7 Q8 3.5 13 4" stroke="#9adc7a" stroke-width="1" fill="none" opacity=".7"/></svg>
<svg class="a" style="left:688px;top:1057px" width="25" height="22" viewBox="0 0 25 22"><rect x="0" y="0" width="25" height="23" fill="#000"/><path d="M9 5 L12 3.2 L13 5 Q16 5.6 17 8 Q19.5 8.6 20 11.5 L18.4 11 L19 15 L17 19.5 L16 19.5 L16.6 15.5 L14.6 13 L12 13.5 L11.5 17 L9.5 19.5 L8.6 19 L9.6 16 L9 12 L6 13.6 L5 12.6 L8 9.5Z" fill="#fff"/></svg>
<svg class="a" style="left:713px;top:1057px" width="25" height="22" viewBox="0 0 25 22"><rect x="0" y="0" width="25" height="23" rx="2" fill="#0c1a30"/><path d="M6 19 L6 4 L12 4 Q17 4 17 8.5 Q17 13 12 13 L9 13 L9 19Z M9 6.5 L9 10.5 L12 10.5 Q14 10.5 14 8.5 Q14 6.5 12 6.5Z" fill="#fff" fill-rule="evenodd"/><circle cx="16.5" cy="18.5" r="1.6" fill="#fff"/><circle cx="20.5" cy="18.5" r="1.6" fill="#fff"/></svg>
<div class="a" style="left:196px;top:1056px;width:30px;height:24px;background:linear-gradient(#3a4450,#1a2028 40%,#566068 100%);overflow:hidden"></div>
<svg class="a" style="left:199px;top:1058px" width="24" height="22" viewBox="0 0 24 22"><defs><radialGradient id="glb" cx=".5" cy=".45" r=".55"><stop offset="0" stop-color="#dff0ff"/><stop offset=".45" stop-color="#5a9ae0"/><stop offset="1" stop-color="#1a3a7a"/></radialGradient></defs><circle cx="12" cy="13" r="10.5" fill="#cfd4da" stroke="#8a9098" stroke-width=".8"/><circle cx="12" cy="13" r="7.6" fill="url(#glb)"/></svg>
<div class="a" style="left:740px;top:1063px;width:5px;height:1px;background:#9a9a9a;box-shadow:0 3px #9a9a9a,0 6px #9a9a9a,0 9px #9a9a9a"></div>
<div class="tk" style="left:749px;">
<svg class="a" style="left:6px;top:1px" width="17" height="17" viewBox="0 0 20 20"><rect x="1" y="2" width="17" height="16" fill="#e4e8f0" stroke="#555" stroke-width=".8" stroke-dasharray="1.5 1"/><circle cx="9.5" cy="9" r="5" fill="#3a6ac0"/><path d="M6 12 L13 12 L13 15 L6 15Z" fill="#e8d8b0"/></svg>
<span>C...</span></div>
<div class="tk" style="left:813px;">
<svg class="a" style="left:6px;top:1px" width="17" height="17" viewBox="0 0 20 20"><rect x="1" y="1.5" width="18" height="17" rx="2" fill="#2a2214" stroke="#777" stroke-width=".9"/><path d="M3.5 12 L6.5 12 L8 6 L10 15 L12 9 L13.5 12 L16.5 12" stroke="#f0c020" stroke-width="1.3" fill="none"/></svg>
<b>M...</b></div>
<div class="tk" style="left:877px;">
<svg class="a" style="left:6px;top:1px" width="17" height="17" viewBox="0 0 20 20"><rect x="5" y="8" width="13" height="10" fill="#f4f4f4" stroke="#c4c4c4" stroke-width=".6"/><circle cx="11" cy="7.5" r="5" fill="#cfe0f6" stroke="#5a7aa8" stroke-width="1.6"/><path d="M7.6 11.4 L3 17" stroke="#4a4a4a" stroke-width="2.2" stroke-linecap="round"/></svg>
<span>k...</span></div>
<div class="tk" style="left:941px;">
<svg class="a" style="left:6px;top:1px" width="17" height="17" viewBox="0 0 22 22"><rect x="1" y="1" width="20" height="20" fill="#c4141a"/><rect x="1" y="1" width="20" height="20" fill="none" stroke="#f0b0b0" stroke-width="1.5" stroke-dasharray="1.5 1.5"/><path d="M5 17 L7 5 L14 5 L13.6 7.4 L9.2 7.4 L8.8 10 L12.4 10 L12 12.2 L8.4 12.2 L7.6 17Z" fill="#fff"/><path d="M11.4 10.5 L18 10.5 L17.7 12.3 L14 15.2 L17 15.2 L16.7 17 L10 17 L10.3 15.2 L14 12.3 L11.1 12.3Z" fill="#fff"/></svg>
<span>M...</span></div>
<div class="tk" style="left:1005px;">
<svg class="a" style="left:6px;top:1px" width="17" height="17" viewBox="0 0 20 20"><path d="M4 3 L16 3 L19 13 L19 17 L1 17 L1 13Z" fill="#dedede" stroke="#b9b9b9" stroke-width=".8"/><path d="M1 13 L19 13 L19 17 L1 17Z" fill="#c4c4c4"/><path d="M10 5 L10 11 M8 7 L10 5 L12 7 M7.5 9 L10 11 L12.5 9" stroke="#b4b4b4" stroke-width="1" fill="none"/></svg>
<span>d...</span></div>
<div class="tk" style="left:1069px;">
<svg class="a" style="left:6px;top:1px" width="17" height="17" viewBox="0 0 20 20"><path d="M4 3 L16 3 L19 13 L19 17 L1 17 L1 13Z" fill="#dedede" stroke="#b9b9b9" stroke-width=".8"/><path d="M1 13 L19 13 L19 17 L1 17Z" fill="#c4c4c4"/><path d="M10 5 L10 11 M8 7 L10 5 L12 7 M7.5 9 L10 11 L12.5 9" stroke="#b4b4b4" stroke-width="1" fill="none"/></svg>
<span>al...</span></div>
<div class="tk" style="left:1133px;background:linear-gradient(#b4b4b4,#c0c0c0);border-color:#8f8f8f;box-shadow:inset 0 1px 2px rgba(0,0,0,.2)">
<svg class="a" style="left:6px;top:1px" width="17" height="17" viewBox="0 0 20 20"><path d="M1.5 6 L1.5 3 L8 3 L9.2 4.5 L18.5 4.5 L18.5 8 L1.5 8Z" fill="#f4f4f4" stroke="#c0c0c0" stroke-width=".7"/><rect x=".8" y="6.5" width="18.4" height="12" rx="1" fill="url(#gG)" stroke="#6a8f44" stroke-width=".6"/></svg>
<span>b...</span></div>
<div class="tk" style="left:1197px;">
<svg class="a" style="left:6px;top:1px" width="17" height="17" viewBox="0 0 20 20"><path d="M1.5 6 L1.5 3 L8 3 L9.2 4.5 L18.5 4.5 L18.5 8 L1.5 8Z" fill="#f4f4f4" stroke="#c0c0c0" stroke-width=".7"/><rect x=".8" y="6.5" width="18.4" height="12" rx="1" fill="url(#gG)" stroke="#6a8f44" stroke-width=".6"/></svg>
<span>v...</span></div>
<div class="tk" style="left:1261px;">
<svg class="a" style="left:6px;top:1px" width="17" height="17" viewBox="0 0 22 22"><circle cx="12" cy="10" r="8.4" fill="#3a78c8"/><path d="M8 4 Q11 2.6 14 3.6 Q12.5 5 13.5 6.5 Q16 6 17 8 Q15 8.6 14.6 10 Q12 10 11 8.6 Q9 9 8 7.4 Q9 6 8 4Z" fill="#7ab4ec"/><path d="M4.2 1.6 Q3.4 4.4 4.6 6.4 Q3 9 3.6 12 Q2 10.6 1.8 8 Q.2 12.6 2.6 16.4 Q5.6 21 11.4 21 Q17.6 20.8 20.4 15.6 Q22.4 11 20.6 6.6 Q20.4 9 19.4 10 Q19.6 13.4 17 15.6 Q13.6 18 10 16.4 Q7.4 15 7.2 12.4 Q8.6 13.4 10.4 12.8 Q11.6 11.6 10.6 10.6 Q8.4 10.8 7.4 9 Q7 7 8.4 5.4 Q6 5.4 4.8 6.6 Q4 4 4.2 1.6Z" fill="#ee7c14"/><path d="M4.2 1.6 Q3.4 4.4 4.6 6.4 Q3 9 3.6 12 Q4.4 8.6 7.4 9 Q7 7 8.4 5.4 Q6 5.4 4.8 6.6 Q4 4 4.2 1.6Z" fill="#f8b82a"/><path d="M2.6 16.4 Q5.6 21 11.4 21 Q17.6 20.8 20.4 15.6 Q16 19.6 10.6 18.6 Q5.6 18 2.6 16.4Z" fill="#d8500e"/></svg>
<span>S...</span></div>
<div class="tk" style="left:1325px;">
<svg class="a" style="left:6px;top:1px;opacity:.55" width="17" height="17" viewBox="0 0 22 22"><circle cx="12" cy="10" r="8.4" fill="#3a78c8"/><path d="M8 4 Q11 2.6 14 3.6 Q12.5 5 13.5 6.5 Q16 6 17 8 Q15 8.6 14.6 10 Q12 10 11 8.6 Q9 9 8 7.4 Q9 6 8 4Z" fill="#7ab4ec"/><path d="M4.2 1.6 Q3.4 4.4 4.6 6.4 Q3 9 3.6 12 Q2 10.6 1.8 8 Q.2 12.6 2.6 16.4 Q5.6 21 11.4 21 Q17.6 20.8 20.4 15.6 Q22.4 11 20.6 6.6 Q20.4 9 19.4 10 Q19.6 13.4 17 15.6 Q13.6 18 10 16.4 Q7.4 15 7.2 12.4 Q8.6 13.4 10.4 12.8 Q11.6 11.6 10.6 10.6 Q8.4 10.8 7.4 9 Q7 7 8.4 5.4 Q6 5.4 4.8 6.6 Q4 4 4.2 1.6Z" fill="#ee7c14"/><path d="M4.2 1.6 Q3.4 4.4 4.6 6.4 Q3 9 3.6 12 Q4.4 8.6 7.4 9 Q7 7 8.4 5.4 Q6 5.4 4.8 6.6 Q4 4 4.2 1.6Z" fill="#f8b82a"/><path d="M2.6 16.4 Q5.6 21 11.4 21 Q17.6 20.8 20.4 15.6 Q16 19.6 10.6 18.6 Q5.6 18 2.6 16.4Z" fill="#d8500e"/></svg>
<span>[...</span></div>
<div class="tk" style="left:1389px;">
<svg class="a" style="left:6px;top:1px;opacity:.55" width="17" height="17" viewBox="0 0 22 22"><circle cx="12" cy="10" r="8.4" fill="#3a78c8"/><path d="M8 4 Q11 2.6 14 3.6 Q12.5 5 13.5 6.5 Q16 6 17 8 Q15 8.6 14.6 10 Q12 10 11 8.6 Q9 9 8 7.4 Q9 6 8 4Z" fill="#7ab4ec"/><path d="M4.2 1.6 Q3.4 4.4 4.6 6.4 Q3 9 3.6 12 Q2 10.6 1.8 8 Q.2 12.6 2.6 16.4 Q5.6 21 11.4 21 Q17.6 20.8 20.4 15.6 Q22.4 11 20.6 6.6 Q20.4 9 19.4 10 Q19.6 13.4 17 15.6 Q13.6 18 10 16.4 Q7.4 15 7.2 12.4 Q8.6 13.4 10.4 12.8 Q11.6 11.6 10.6 10.6 Q8.4 10.8 7.4 9 Q7 7 8.4 5.4 Q6 5.4 4.8 6.6 Q4 4 4.2 1.6Z" fill="#ee7c14"/><path d="M4.2 1.6 Q3.4 4.4 4.6 6.4 Q3 9 3.6 12 Q4.4 8.6 7.4 9 Q7 7 8.4 5.4 Q6 5.4 4.8 6.6 Q4 4 4.2 1.6Z" fill="#f8b82a"/><path d="M2.6 16.4 Q5.6 21 11.4 21 Q17.6 20.8 20.4 15.6 Q16 19.6 10.6 18.6 Q5.6 18 2.6 16.4Z" fill="#d8500e"/></svg>
<span>[...</span></div>
<div class="tk" style="left:1453px;">
<svg class="a" style="left:6px;top:1px" width="17" height="17" viewBox="0 0 22 22"><rect x="1" y="1" width="20" height="20" fill="#c4141a"/><rect x="1" y="1" width="20" height="20" fill="none" stroke="#f0b0b0" stroke-width="1.5" stroke-dasharray="1.5 1.5"/><path d="M5 17 L7 5 L14 5 L13.6 7.4 L9.2 7.4 L8.8 10 L12.4 10 L12 12.2 L8.4 12.2 L7.6 17Z" fill="#fff"/><path d="M11.4 10.5 L18 10.5 L17.7 12.3 L14 15.2 L17 15.2 L16.7 17 L10 17 L10.3 15.2 L14 12.3 L11.1 12.3Z" fill="#fff"/></svg>
<span>M...</span></div>
<div class="sep" style="left:1521px;top:1059px;height:18px"></div>
<div class="a" style="left:1528px;top:1058px;width:40px;height:20px;background:#000;border:1px solid #3a3a3a;overflow:hidden"><svg class="a" style="left:0;top:10px" width="38" height="8"><path d="M0 8 L0 6 L2 5 L3 6 L5 4 L6 6 L8 5 L9 3 L10 5 L12 4 L13 6 L15 5 L17 6 L19 5 L21 6 L23 6 L25 5 L27 6 L29 6 L30 3 L31 6 L33 5 L35 2 L36 5 L38 5 L38 8Z" fill="#20e020"/><path d="M0 8h38" stroke="#e02020" stroke-width="1.4"/></svg></div>
<div class="a" style="left:1571px;top:1058px;width:40px;height:20px;background:#000;border:1px solid #3a3a3a;border-bottom:2px solid #c81818"></div>
<div class="a" style="left:1616px;top:1063px;width:4px;height:1px;background:#9a9a9a;box-shadow:0 3px #9a9a9a,0 6px #9a9a9a,0 9px #9a9a9a"></div>
<svg class="a" style="left:1624px;top:1058px" width="20" height="21" viewBox="0 0 20 21"><path d="M10 1 Q14 3.5 19 3.5 Q19.5 14 10 20 Q.5 14 1 3.5 Q6 3.5 10 1Z" fill="#f4f4f4" stroke="#5a5a5a" stroke-width="1.2"/><circle cx="10" cy="10" r="5.2" fill="#3a7ad0"/><rect x="9.2" y="8.8" width="1.7" height="4.4" fill="#fff"/><circle cx="10" cy="7" r="1" fill="#fff"/></svg>
<svg class="a" style="left:1651px;top:1061px" width="16" height="15" viewBox="0 0 16 15"><g fill="#b9b9b9"><rect x="0" y="11" width="3" height="4"/><rect x="4.3" y="8" width="3" height="7"/><rect x="8.6" y="4" width="3" height="11"/><rect x="12.9" y="0" width="3" height="15"/></g></svg>
<div class="t" style="left:1675px;top:1061px;font-weight:bold;font-size:13px;color:#4a4a9c">FR</div>
<svg class="a" style="left:1697px;top:1058px" width="23" height="21" viewBox="0 0 23 21"><rect x="1" y=".8" width="21" height="14" fill="#4a4a4a" stroke="#9a9a9a" stroke-width="1"/><rect x="2.5" y="2.3" width="18" height="11" fill="#3a3a3a"/><path d="M1.6 1.4 L13.5 13.2 L1.6 13.2Z" fill="#e8d428" stroke="#b09a10" stroke-width=".6"/><path d="M4 6.5 L8.5 11 L4 11Z" fill="#4a4a4a"/><path d="M8.5 15 L14.5 15 L15.5 18 L7.5 18Z" fill="#bdbdbd"/><rect x="4.5" y="18" width="14" height="2.4" rx="1" fill="#f0f0f0" stroke="#a0a0a0" stroke-width=".6"/></svg>
<svg class="a" style="left:1726px;top:1057px" width="17" height="22" viewBox="0 0 17 22"><ellipse cx="8.5" cy="11" rx="8" ry="10.5" fill="#3a7ad8"/><path d="M4.5 7 L12 14.5 L8.5 18 L8.5 4 L12 7.5 L4.5 15" stroke="#fff" stroke-width="1.4" fill="none"/></svg>
<svg class="a" style="left:1749px;top:1060px" width="19" height="16" viewBox="0 0 19 16"><path d="M1 5.5 L4.5 5.5 L9 1.5 L9 14.5 L4.5 10.5 L1 10.5Z" fill="#3a3a3a"/><path d="M11 5 Q12.8 8 11 11 M13.4 3 Q16.2 8 13.4 13 M15.8 1.2 Q19.4 8 15.8 14.8" stroke="#3a3a3a" stroke-width="1.4" fill="none"/></svg>
<svg class="a" style="left:1774px;top:1061px" width="21" height="13" viewBox="0 0 21 13"><rect x="1" y="1" width="17" height="11" rx="1.5" fill="none" stroke="#333" stroke-width="1.6"/><rect x="18.6" y="4" width="2" height="5" fill="#333"/><path d="M11.5 2.5 L5 7 L9 7 L7.5 10.5 L14 6 L10 6Z" fill="#333"/></svg>
<div class="t" style="left:1800px;top:1061px;color:#222">lun. 20 avril, 21:05</div>
</body></html>
